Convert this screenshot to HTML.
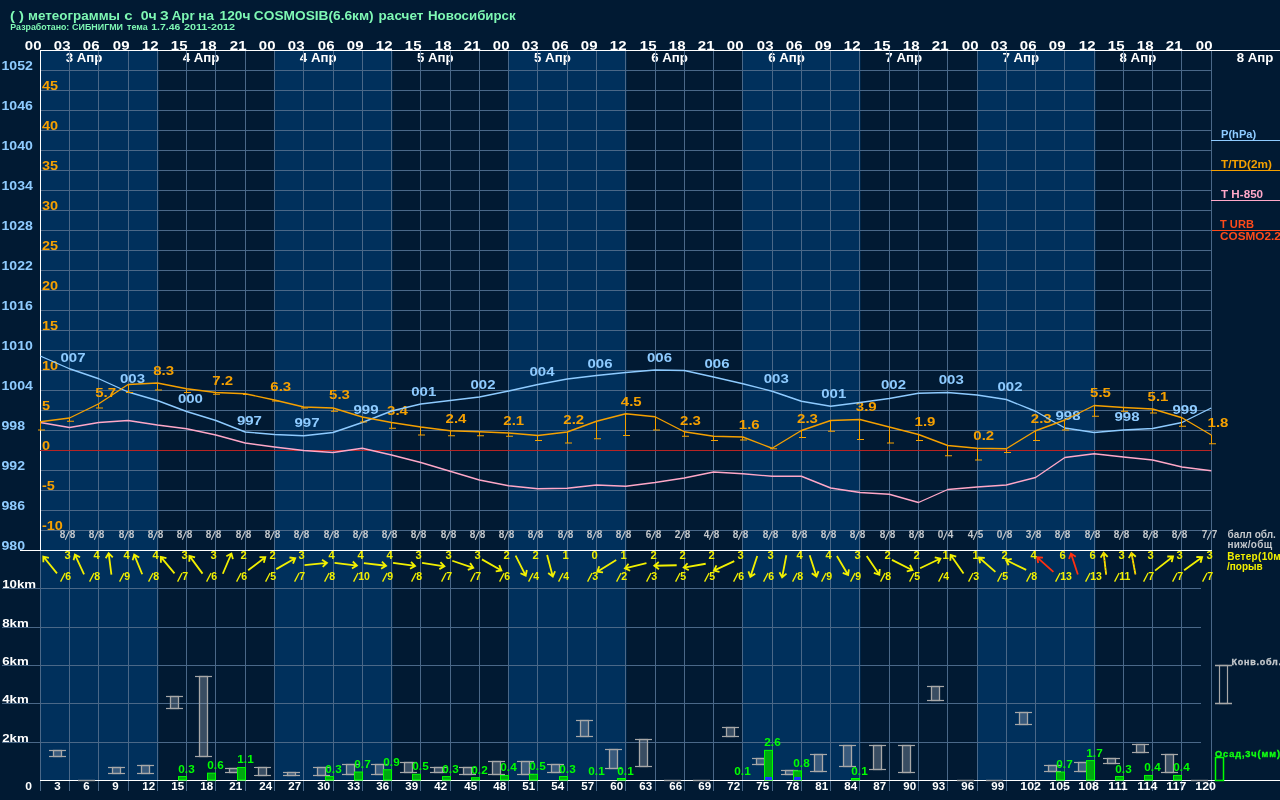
<!DOCTYPE html>
<html><head><meta charset="utf-8"><style>
html,body{margin:0;padding:0;background:#011a33;width:1280px;height:800px;overflow:hidden}
svg{display:block;will-change:transform;font-family:"Liberation Sans",sans-serif}
</style></head><body>
<svg width="1280" height="800" viewBox="0 0 1280 800">
<rect x="0" y="0" width="1280" height="800" fill="#011a33"/>
<rect x="40" y="50" width="118.5" height="730" fill="#00305c"/>
<rect x="274" y="50" width="118.5" height="730" fill="#00305c"/>
<rect x="508" y="50" width="118.5" height="730" fill="#00305c"/>
<rect x="742" y="50" width="118.5" height="730" fill="#00305c"/>
<rect x="977" y="50" width="118.5" height="730" fill="#00305c"/>
<text transform="translate(84.00,62.00) scale(1.06,1)" font-size="12.5" fill="#ffffff" text-anchor="middle" font-weight="bold">3 Апр</text>
<text transform="translate(201.10,62.00) scale(1.06,1)" font-size="12.5" fill="#ffffff" text-anchor="middle" font-weight="bold">4 Апр</text>
<text transform="translate(318.20,62.00) scale(1.06,1)" font-size="12.5" fill="#ffffff" text-anchor="middle" font-weight="bold">4 Апр</text>
<text transform="translate(435.30,62.00) scale(1.06,1)" font-size="12.5" fill="#ffffff" text-anchor="middle" font-weight="bold">5 Апр</text>
<text transform="translate(552.40,62.00) scale(1.06,1)" font-size="12.5" fill="#ffffff" text-anchor="middle" font-weight="bold">5 Апр</text>
<text transform="translate(669.50,62.00) scale(1.06,1)" font-size="12.5" fill="#ffffff" text-anchor="middle" font-weight="bold">6 Апр</text>
<text transform="translate(786.60,62.00) scale(1.06,1)" font-size="12.5" fill="#ffffff" text-anchor="middle" font-weight="bold">6 Апр</text>
<text transform="translate(903.70,62.00) scale(1.06,1)" font-size="12.5" fill="#ffffff" text-anchor="middle" font-weight="bold">7 Апр</text>
<text transform="translate(1020.80,62.00) scale(1.06,1)" font-size="12.5" fill="#ffffff" text-anchor="middle" font-weight="bold">7 Апр</text>
<text transform="translate(1137.90,62.00) scale(1.06,1)" font-size="12.5" fill="#ffffff" text-anchor="middle" font-weight="bold">8 Апр</text>
<text transform="translate(1255.00,62.00) scale(1.06,1)" font-size="12.5" fill="#ffffff" text-anchor="middle" font-weight="bold">8 Апр</text>
<line x1="40" y1="70.5" x2="1211.5" y2="70.5" stroke="#4a6888" stroke-width="1"/>
<line x1="40" y1="90.5" x2="1211.5" y2="90.5" stroke="#4a6888" stroke-width="1"/>
<line x1="40" y1="110.5" x2="1211.5" y2="110.5" stroke="#4a6888" stroke-width="1"/>
<line x1="40" y1="130.5" x2="1211.5" y2="130.5" stroke="#4a6888" stroke-width="1"/>
<line x1="40" y1="150.5" x2="1211.5" y2="150.5" stroke="#4a6888" stroke-width="1"/>
<line x1="40" y1="170.5" x2="1211.5" y2="170.5" stroke="#4a6888" stroke-width="1"/>
<line x1="40" y1="190.5" x2="1211.5" y2="190.5" stroke="#4a6888" stroke-width="1"/>
<line x1="40" y1="210.5" x2="1211.5" y2="210.5" stroke="#4a6888" stroke-width="1"/>
<line x1="40" y1="230.5" x2="1211.5" y2="230.5" stroke="#4a6888" stroke-width="1"/>
<line x1="40" y1="250.5" x2="1211.5" y2="250.5" stroke="#4a6888" stroke-width="1"/>
<line x1="40" y1="270.5" x2="1211.5" y2="270.5" stroke="#4a6888" stroke-width="1"/>
<line x1="40" y1="290.5" x2="1211.5" y2="290.5" stroke="#4a6888" stroke-width="1"/>
<line x1="40" y1="310.5" x2="1211.5" y2="310.5" stroke="#4a6888" stroke-width="1"/>
<line x1="40" y1="330.5" x2="1211.5" y2="330.5" stroke="#4a6888" stroke-width="1"/>
<line x1="40" y1="350.5" x2="1211.5" y2="350.5" stroke="#4a6888" stroke-width="1"/>
<line x1="40" y1="370.5" x2="1211.5" y2="370.5" stroke="#4a6888" stroke-width="1"/>
<line x1="40" y1="390.5" x2="1211.5" y2="390.5" stroke="#4a6888" stroke-width="1"/>
<line x1="40" y1="410.5" x2="1211.5" y2="410.5" stroke="#4a6888" stroke-width="1"/>
<line x1="40" y1="430.5" x2="1211.5" y2="430.5" stroke="#4a6888" stroke-width="1"/>
<line x1="40" y1="450.5" x2="1211.5" y2="450.5" stroke="#4a6888" stroke-width="1"/>
<line x1="40" y1="470.5" x2="1211.5" y2="470.5" stroke="#4a6888" stroke-width="1"/>
<line x1="40" y1="490.5" x2="1211.5" y2="490.5" stroke="#4a6888" stroke-width="1"/>
<line x1="40" y1="510.5" x2="1211.5" y2="510.5" stroke="#4a6888" stroke-width="1"/>
<line x1="40" y1="530.5" x2="1211.5" y2="530.5" stroke="#4a6888" stroke-width="1"/>
<line x1="2" y1="588.5" x2="1201" y2="588.5" stroke="#4a6888" stroke-width="1"/>
<line x1="2" y1="627.5" x2="1201" y2="627.5" stroke="#4a6888" stroke-width="1"/>
<line x1="2" y1="665.5" x2="1201" y2="665.5" stroke="#4a6888" stroke-width="1"/>
<line x1="2" y1="703.5" x2="1201" y2="703.5" stroke="#4a6888" stroke-width="1"/>
<line x1="2" y1="742.5" x2="1201" y2="742.5" stroke="#4a6888" stroke-width="1"/>
<line x1="69.5" y1="50" x2="69.5" y2="791" stroke="#4a6888" stroke-width="1"/>
<line x1="98.5" y1="50" x2="98.5" y2="791" stroke="#4a6888" stroke-width="1"/>
<line x1="128.5" y1="50" x2="128.5" y2="791" stroke="#4a6888" stroke-width="1"/>
<line x1="157.5" y1="50" x2="157.5" y2="791" stroke="#4a6888" stroke-width="1"/>
<line x1="186.5" y1="50" x2="186.5" y2="791" stroke="#4a6888" stroke-width="1"/>
<line x1="215.5" y1="50" x2="215.5" y2="791" stroke="#4a6888" stroke-width="1"/>
<line x1="245.5" y1="50" x2="245.5" y2="791" stroke="#4a6888" stroke-width="1"/>
<line x1="274.5" y1="50" x2="274.5" y2="791" stroke="#4a6888" stroke-width="1"/>
<line x1="303.5" y1="50" x2="303.5" y2="791" stroke="#4a6888" stroke-width="1"/>
<line x1="333.5" y1="50" x2="333.5" y2="791" stroke="#4a6888" stroke-width="1"/>
<line x1="362.5" y1="50" x2="362.5" y2="791" stroke="#4a6888" stroke-width="1"/>
<line x1="391.5" y1="50" x2="391.5" y2="791" stroke="#4a6888" stroke-width="1"/>
<line x1="420.5" y1="50" x2="420.5" y2="791" stroke="#4a6888" stroke-width="1"/>
<line x1="450.5" y1="50" x2="450.5" y2="791" stroke="#4a6888" stroke-width="1"/>
<line x1="479.5" y1="50" x2="479.5" y2="791" stroke="#4a6888" stroke-width="1"/>
<line x1="508.5" y1="50" x2="508.5" y2="791" stroke="#4a6888" stroke-width="1"/>
<line x1="537.5" y1="50" x2="537.5" y2="791" stroke="#4a6888" stroke-width="1"/>
<line x1="567.5" y1="50" x2="567.5" y2="791" stroke="#4a6888" stroke-width="1"/>
<line x1="596.5" y1="50" x2="596.5" y2="791" stroke="#4a6888" stroke-width="1"/>
<line x1="625.5" y1="50" x2="625.5" y2="791" stroke="#4a6888" stroke-width="1"/>
<line x1="655.5" y1="50" x2="655.5" y2="791" stroke="#4a6888" stroke-width="1"/>
<line x1="684.5" y1="50" x2="684.5" y2="791" stroke="#4a6888" stroke-width="1"/>
<line x1="713.5" y1="50" x2="713.5" y2="791" stroke="#4a6888" stroke-width="1"/>
<line x1="742.5" y1="50" x2="742.5" y2="791" stroke="#4a6888" stroke-width="1"/>
<line x1="772.5" y1="50" x2="772.5" y2="791" stroke="#4a6888" stroke-width="1"/>
<line x1="801.5" y1="50" x2="801.5" y2="791" stroke="#4a6888" stroke-width="1"/>
<line x1="830.5" y1="50" x2="830.5" y2="791" stroke="#4a6888" stroke-width="1"/>
<line x1="859.5" y1="50" x2="859.5" y2="791" stroke="#4a6888" stroke-width="1"/>
<line x1="889.5" y1="50" x2="889.5" y2="791" stroke="#4a6888" stroke-width="1"/>
<line x1="918.5" y1="50" x2="918.5" y2="791" stroke="#4a6888" stroke-width="1"/>
<line x1="947.5" y1="50" x2="947.5" y2="791" stroke="#4a6888" stroke-width="1"/>
<line x1="977.5" y1="50" x2="977.5" y2="791" stroke="#4a6888" stroke-width="1"/>
<line x1="1006.5" y1="50" x2="1006.5" y2="791" stroke="#4a6888" stroke-width="1"/>
<line x1="1035.5" y1="50" x2="1035.5" y2="791" stroke="#4a6888" stroke-width="1"/>
<line x1="1064.5" y1="50" x2="1064.5" y2="791" stroke="#4a6888" stroke-width="1"/>
<line x1="1094.5" y1="50" x2="1094.5" y2="791" stroke="#4a6888" stroke-width="1"/>
<line x1="1123.5" y1="50" x2="1123.5" y2="791" stroke="#4a6888" stroke-width="1"/>
<line x1="1152.5" y1="50" x2="1152.5" y2="791" stroke="#4a6888" stroke-width="1"/>
<line x1="1181.5" y1="50" x2="1181.5" y2="791" stroke="#4a6888" stroke-width="1"/>
<line x1="1211.5" y1="50" x2="1211.5" y2="791" stroke="#4a6888" stroke-width="1"/>
<line x1="40.5" y1="550" x2="40.5" y2="791" stroke="#4a6888" stroke-width="1"/>
<line x1="40" y1="50.5" x2="1280" y2="50.5" stroke="#ffffff" stroke-width="1"/>
<line x1="40.5" y1="50" x2="40.5" y2="551" stroke="#ffffff" stroke-width="1"/>
<line x1="20" y1="550.5" x2="1212" y2="550.5" stroke="#ffffff" stroke-width="1"/>
<line x1="40" y1="780.5" x2="1280" y2="780.5" stroke="#ffffff" stroke-width="1"/>
<line x1="40" y1="450.5" x2="1211.5" y2="450.5" stroke="#b82424" stroke-width="1"/>
<text transform="translate(10.01,20.00) scale(1.1814,1)" font-size="12.5" fill="#7ef8b4" text-anchor="start" font-weight="bold" xml:space="preserve">( )</text>
<text transform="translate(28.10,20.00) scale(1.073,1)" font-size="12.5" fill="#7ef8b4" text-anchor="start" font-weight="bold" xml:space="preserve">метеограммы</text>
<text transform="translate(124.20,20.00) scale(1.2,1)" font-size="12.5" fill="#7ef8b4" text-anchor="start" font-weight="bold" xml:space="preserve">с</text>
<text transform="translate(140.63,20.00) scale(1.1308,1)" font-size="12.5" fill="#7ef8b4" text-anchor="start" font-weight="bold" xml:space="preserve">0ч</text>
<text transform="translate(159.99,20.00) scale(1.248,1)" font-size="12.5" fill="#7ef8b4" text-anchor="start" font-weight="bold" xml:space="preserve">3</text>
<text transform="translate(171.84,20.00) scale(1.0541,1)" font-size="12.5" fill="#7ef8b4" text-anchor="start" font-weight="bold" xml:space="preserve">Apr</text>
<text transform="translate(198.29,20.00) scale(1.0857,1)" font-size="12.5" fill="#7ef8b4" text-anchor="start" font-weight="bold" xml:space="preserve">на</text>
<text transform="translate(219.58,20.00) scale(1.0991,1)" font-size="12.5" fill="#7ef8b4" text-anchor="start" font-weight="bold" xml:space="preserve">120ч</text>
<text transform="translate(253.85,20.00) scale(1.0984,1)" font-size="12.5" fill="#7ef8b4" text-anchor="start" font-weight="bold" xml:space="preserve">COSMOSIB(6.6км)</text>
<text transform="translate(378.59,20.00) scale(1.084,1)" font-size="12.5" fill="#7ef8b4" text-anchor="start" font-weight="bold" xml:space="preserve">расчет</text>
<text transform="translate(427.95,20.00) scale(1.0636,1)" font-size="12.5" fill="#7ef8b4" text-anchor="start" font-weight="bold" xml:space="preserve">Новосибирск</text>
<text transform="translate(10.35,30.00) scale(0.9806,1)" font-size="9" fill="#7ef8b4" text-anchor="start" font-weight="bold" xml:space="preserve">Разработано:</text>
<text transform="translate(72.05,30.00) scale(0.9911,1)" font-size="9" fill="#7ef8b4" text-anchor="start" font-weight="bold" xml:space="preserve">СИБНИГМИ</text>
<text transform="translate(127.05,30.00) scale(0.9928,1)" font-size="9" fill="#7ef8b4" text-anchor="start" font-weight="bold" xml:space="preserve">тема</text>
<text transform="translate(151.32,30.00) scale(1.1588,1)" font-size="9" fill="#7ef8b4" text-anchor="start" font-weight="bold" xml:space="preserve">1.7.46</text>
<text transform="translate(183.90,30.00) scale(1.2047,1)" font-size="9" fill="#7ef8b4" text-anchor="start" font-weight="bold" xml:space="preserve">2011-2012</text>
<text transform="translate(41.50,50.00) scale(1.2,1)" font-size="12.5" fill="#ffffff" text-anchor="end" font-weight="bold">00</text>
<text transform="translate(70.50,50.00) scale(1.2,1)" font-size="12.5" fill="#ffffff" text-anchor="end" font-weight="bold">03</text>
<text transform="translate(99.50,50.00) scale(1.2,1)" font-size="12.5" fill="#ffffff" text-anchor="end" font-weight="bold">06</text>
<text transform="translate(129.50,50.00) scale(1.2,1)" font-size="12.5" fill="#ffffff" text-anchor="end" font-weight="bold">09</text>
<text transform="translate(158.50,50.00) scale(1.2,1)" font-size="12.5" fill="#ffffff" text-anchor="end" font-weight="bold">12</text>
<text transform="translate(187.50,50.00) scale(1.2,1)" font-size="12.5" fill="#ffffff" text-anchor="end" font-weight="bold">15</text>
<text transform="translate(216.50,50.00) scale(1.2,1)" font-size="12.5" fill="#ffffff" text-anchor="end" font-weight="bold">18</text>
<text transform="translate(246.50,50.00) scale(1.2,1)" font-size="12.5" fill="#ffffff" text-anchor="end" font-weight="bold">21</text>
<text transform="translate(275.50,50.00) scale(1.2,1)" font-size="12.5" fill="#ffffff" text-anchor="end" font-weight="bold">00</text>
<text transform="translate(304.50,50.00) scale(1.2,1)" font-size="12.5" fill="#ffffff" text-anchor="end" font-weight="bold">03</text>
<text transform="translate(334.50,50.00) scale(1.2,1)" font-size="12.5" fill="#ffffff" text-anchor="end" font-weight="bold">06</text>
<text transform="translate(363.50,50.00) scale(1.2,1)" font-size="12.5" fill="#ffffff" text-anchor="end" font-weight="bold">09</text>
<text transform="translate(392.50,50.00) scale(1.2,1)" font-size="12.5" fill="#ffffff" text-anchor="end" font-weight="bold">12</text>
<text transform="translate(421.50,50.00) scale(1.2,1)" font-size="12.5" fill="#ffffff" text-anchor="end" font-weight="bold">15</text>
<text transform="translate(451.50,50.00) scale(1.2,1)" font-size="12.5" fill="#ffffff" text-anchor="end" font-weight="bold">18</text>
<text transform="translate(480.50,50.00) scale(1.2,1)" font-size="12.5" fill="#ffffff" text-anchor="end" font-weight="bold">21</text>
<text transform="translate(509.50,50.00) scale(1.2,1)" font-size="12.5" fill="#ffffff" text-anchor="end" font-weight="bold">00</text>
<text transform="translate(538.50,50.00) scale(1.2,1)" font-size="12.5" fill="#ffffff" text-anchor="end" font-weight="bold">03</text>
<text transform="translate(568.50,50.00) scale(1.2,1)" font-size="12.5" fill="#ffffff" text-anchor="end" font-weight="bold">06</text>
<text transform="translate(597.50,50.00) scale(1.2,1)" font-size="12.5" fill="#ffffff" text-anchor="end" font-weight="bold">09</text>
<text transform="translate(626.50,50.00) scale(1.2,1)" font-size="12.5" fill="#ffffff" text-anchor="end" font-weight="bold">12</text>
<text transform="translate(656.50,50.00) scale(1.2,1)" font-size="12.5" fill="#ffffff" text-anchor="end" font-weight="bold">15</text>
<text transform="translate(685.50,50.00) scale(1.2,1)" font-size="12.5" fill="#ffffff" text-anchor="end" font-weight="bold">18</text>
<text transform="translate(714.50,50.00) scale(1.2,1)" font-size="12.5" fill="#ffffff" text-anchor="end" font-weight="bold">21</text>
<text transform="translate(743.50,50.00) scale(1.2,1)" font-size="12.5" fill="#ffffff" text-anchor="end" font-weight="bold">00</text>
<text transform="translate(773.50,50.00) scale(1.2,1)" font-size="12.5" fill="#ffffff" text-anchor="end" font-weight="bold">03</text>
<text transform="translate(802.50,50.00) scale(1.2,1)" font-size="12.5" fill="#ffffff" text-anchor="end" font-weight="bold">06</text>
<text transform="translate(831.50,50.00) scale(1.2,1)" font-size="12.5" fill="#ffffff" text-anchor="end" font-weight="bold">09</text>
<text transform="translate(860.50,50.00) scale(1.2,1)" font-size="12.5" fill="#ffffff" text-anchor="end" font-weight="bold">12</text>
<text transform="translate(890.50,50.00) scale(1.2,1)" font-size="12.5" fill="#ffffff" text-anchor="end" font-weight="bold">15</text>
<text transform="translate(919.50,50.00) scale(1.2,1)" font-size="12.5" fill="#ffffff" text-anchor="end" font-weight="bold">18</text>
<text transform="translate(948.50,50.00) scale(1.2,1)" font-size="12.5" fill="#ffffff" text-anchor="end" font-weight="bold">21</text>
<text transform="translate(978.50,50.00) scale(1.2,1)" font-size="12.5" fill="#ffffff" text-anchor="end" font-weight="bold">00</text>
<text transform="translate(1007.50,50.00) scale(1.2,1)" font-size="12.5" fill="#ffffff" text-anchor="end" font-weight="bold">03</text>
<text transform="translate(1036.50,50.00) scale(1.2,1)" font-size="12.5" fill="#ffffff" text-anchor="end" font-weight="bold">06</text>
<text transform="translate(1065.50,50.00) scale(1.2,1)" font-size="12.5" fill="#ffffff" text-anchor="end" font-weight="bold">09</text>
<text transform="translate(1095.50,50.00) scale(1.2,1)" font-size="12.5" fill="#ffffff" text-anchor="end" font-weight="bold">12</text>
<text transform="translate(1124.50,50.00) scale(1.2,1)" font-size="12.5" fill="#ffffff" text-anchor="end" font-weight="bold">15</text>
<text transform="translate(1153.50,50.00) scale(1.2,1)" font-size="12.5" fill="#ffffff" text-anchor="end" font-weight="bold">18</text>
<text transform="translate(1182.50,50.00) scale(1.2,1)" font-size="12.5" fill="#ffffff" text-anchor="end" font-weight="bold">21</text>
<text transform="translate(1212.50,50.00) scale(1.2,1)" font-size="12.5" fill="#ffffff" text-anchor="end" font-weight="bold">00</text>
<text transform="translate(1.50,70.00) scale(1.13,1)" font-size="12.5" fill="#8ecbff" text-anchor="start" font-weight="bold">1052</text>
<text transform="translate(1.50,110.00) scale(1.13,1)" font-size="12.5" fill="#8ecbff" text-anchor="start" font-weight="bold">1046</text>
<text transform="translate(1.50,150.00) scale(1.13,1)" font-size="12.5" fill="#8ecbff" text-anchor="start" font-weight="bold">1040</text>
<text transform="translate(1.50,190.00) scale(1.13,1)" font-size="12.5" fill="#8ecbff" text-anchor="start" font-weight="bold">1034</text>
<text transform="translate(1.50,230.00) scale(1.13,1)" font-size="12.5" fill="#8ecbff" text-anchor="start" font-weight="bold">1028</text>
<text transform="translate(1.50,270.00) scale(1.13,1)" font-size="12.5" fill="#8ecbff" text-anchor="start" font-weight="bold">1022</text>
<text transform="translate(1.50,310.00) scale(1.13,1)" font-size="12.5" fill="#8ecbff" text-anchor="start" font-weight="bold">1016</text>
<text transform="translate(1.50,350.00) scale(1.13,1)" font-size="12.5" fill="#8ecbff" text-anchor="start" font-weight="bold">1010</text>
<text transform="translate(1.50,390.00) scale(1.13,1)" font-size="12.5" fill="#8ecbff" text-anchor="start" font-weight="bold">1004</text>
<text transform="translate(1.50,430.00) scale(1.13,1)" font-size="12.5" fill="#8ecbff" text-anchor="start" font-weight="bold">998</text>
<text transform="translate(1.50,470.00) scale(1.13,1)" font-size="12.5" fill="#8ecbff" text-anchor="start" font-weight="bold">992</text>
<text transform="translate(1.50,510.00) scale(1.13,1)" font-size="12.5" fill="#8ecbff" text-anchor="start" font-weight="bold">986</text>
<text transform="translate(1.50,550.00) scale(1.13,1)" font-size="12.5" fill="#8ecbff" text-anchor="start" font-weight="bold">980</text>
<text transform="translate(42.00,90.00) scale(1.16,1)" font-size="12.5" fill="#f5a000" text-anchor="start" font-weight="bold">45</text>
<text transform="translate(42.00,130.00) scale(1.16,1)" font-size="12.5" fill="#f5a000" text-anchor="start" font-weight="bold">40</text>
<text transform="translate(42.00,170.00) scale(1.16,1)" font-size="12.5" fill="#f5a000" text-anchor="start" font-weight="bold">35</text>
<text transform="translate(42.00,210.00) scale(1.16,1)" font-size="12.5" fill="#f5a000" text-anchor="start" font-weight="bold">30</text>
<text transform="translate(42.00,250.00) scale(1.16,1)" font-size="12.5" fill="#f5a000" text-anchor="start" font-weight="bold">25</text>
<text transform="translate(42.00,290.00) scale(1.16,1)" font-size="12.5" fill="#f5a000" text-anchor="start" font-weight="bold">20</text>
<text transform="translate(42.00,330.00) scale(1.16,1)" font-size="12.5" fill="#f5a000" text-anchor="start" font-weight="bold">15</text>
<text transform="translate(42.00,370.00) scale(1.16,1)" font-size="12.5" fill="#f5a000" text-anchor="start" font-weight="bold">10</text>
<text transform="translate(42.00,410.00) scale(1.16,1)" font-size="12.5" fill="#f5a000" text-anchor="start" font-weight="bold">5</text>
<text transform="translate(42.00,450.00) scale(1.16,1)" font-size="12.5" fill="#f5a000" text-anchor="start" font-weight="bold">0</text>
<text transform="translate(42.00,490.00) scale(1.16,1)" font-size="12.5" fill="#f5a000" text-anchor="start" font-weight="bold">-5</text>
<text transform="translate(42.00,530.00) scale(1.16,1)" font-size="12.5" fill="#f5a000" text-anchor="start" font-weight="bold">-10</text>
<text transform="translate(73.00,361.50) scale(1.2,1)" font-size="12.5" fill="#8ecbff" text-anchor="middle" font-weight="bold">007</text>
<text transform="translate(132.50,383.25) scale(1.2,1)" font-size="12.5" fill="#8ecbff" text-anchor="middle" font-weight="bold">003</text>
<text transform="translate(190.40,403.25) scale(1.2,1)" font-size="12.5" fill="#8ecbff" text-anchor="middle" font-weight="bold">000</text>
<text transform="translate(249.40,424.50) scale(1.2,1)" font-size="12.5" fill="#8ecbff" text-anchor="middle" font-weight="bold">997</text>
<text transform="translate(307.00,427.00) scale(1.2,1)" font-size="12.5" fill="#8ecbff" text-anchor="middle" font-weight="bold">997</text>
<text transform="translate(366.00,414.00) scale(1.2,1)" font-size="12.5" fill="#8ecbff" text-anchor="middle" font-weight="bold">999</text>
<text transform="translate(423.75,396.25) scale(1.2,1)" font-size="12.5" fill="#8ecbff" text-anchor="middle" font-weight="bold">001</text>
<text transform="translate(483.00,389.00) scale(1.2,1)" font-size="12.5" fill="#8ecbff" text-anchor="middle" font-weight="bold">002</text>
<text transform="translate(542.00,376.25) scale(1.2,1)" font-size="12.5" fill="#8ecbff" text-anchor="middle" font-weight="bold">004</text>
<text transform="translate(600.00,368.25) scale(1.2,1)" font-size="12.5" fill="#8ecbff" text-anchor="middle" font-weight="bold">006</text>
<text transform="translate(659.50,362.00) scale(1.2,1)" font-size="12.5" fill="#8ecbff" text-anchor="middle" font-weight="bold">006</text>
<text transform="translate(717.00,368.25) scale(1.2,1)" font-size="12.5" fill="#8ecbff" text-anchor="middle" font-weight="bold">006</text>
<text transform="translate(776.25,383.25) scale(1.2,1)" font-size="12.5" fill="#8ecbff" text-anchor="middle" font-weight="bold">003</text>
<text transform="translate(833.75,398.25) scale(1.2,1)" font-size="12.5" fill="#8ecbff" text-anchor="middle" font-weight="bold">001</text>
<text transform="translate(893.50,389.00) scale(1.2,1)" font-size="12.5" fill="#8ecbff" text-anchor="middle" font-weight="bold">002</text>
<text transform="translate(951.25,384.00) scale(1.2,1)" font-size="12.5" fill="#8ecbff" text-anchor="middle" font-weight="bold">003</text>
<text transform="translate(1010.00,390.75) scale(1.2,1)" font-size="12.5" fill="#8ecbff" text-anchor="middle" font-weight="bold">002</text>
<text transform="translate(1068.00,420.00) scale(1.2,1)" font-size="12.5" fill="#8ecbff" text-anchor="middle" font-weight="bold">998</text>
<text transform="translate(1127.00,420.75) scale(1.2,1)" font-size="12.5" fill="#8ecbff" text-anchor="middle" font-weight="bold">998</text>
<text transform="translate(1185.00,414.00) scale(1.2,1)" font-size="12.5" fill="#8ecbff" text-anchor="middle" font-weight="bold">999</text>
<text transform="translate(105.60,396.50) scale(1.2,1)" font-size="12.5" fill="#f5a000" text-anchor="middle" font-weight="bold">5.7</text>
<text transform="translate(163.60,375.25) scale(1.2,1)" font-size="12.5" fill="#f5a000" text-anchor="middle" font-weight="bold">8.3</text>
<text transform="translate(222.75,384.50) scale(1.2,1)" font-size="12.5" fill="#f5a000" text-anchor="middle" font-weight="bold">7.2</text>
<text transform="translate(280.75,391.25) scale(1.2,1)" font-size="12.5" fill="#f5a000" text-anchor="middle" font-weight="bold">6.3</text>
<text transform="translate(339.50,398.50) scale(1.2,1)" font-size="12.5" fill="#f5a000" text-anchor="middle" font-weight="bold">5.3</text>
<text transform="translate(397.50,415.25) scale(1.2,1)" font-size="12.5" fill="#f5a000" text-anchor="middle" font-weight="bold">3.4</text>
<text transform="translate(456.00,423.25) scale(1.2,1)" font-size="12.5" fill="#f5a000" text-anchor="middle" font-weight="bold">2.4</text>
<text transform="translate(513.75,425.00) scale(1.2,1)" font-size="12.5" fill="#f5a000" text-anchor="middle" font-weight="bold">2.1</text>
<text transform="translate(573.75,424.00) scale(1.2,1)" font-size="12.5" fill="#f5a000" text-anchor="middle" font-weight="bold">2.2</text>
<text transform="translate(631.25,405.75) scale(1.2,1)" font-size="12.5" fill="#f5a000" text-anchor="middle" font-weight="bold">4.5</text>
<text transform="translate(690.50,424.50) scale(1.2,1)" font-size="12.5" fill="#f5a000" text-anchor="middle" font-weight="bold">2.3</text>
<text transform="translate(749.25,429.00) scale(1.2,1)" font-size="12.5" fill="#f5a000" text-anchor="middle" font-weight="bold">1.6</text>
<text transform="translate(807.50,423.25) scale(1.2,1)" font-size="12.5" fill="#f5a000" text-anchor="middle" font-weight="bold">2.3</text>
<text transform="translate(866.25,411.25) scale(1.2,1)" font-size="12.5" fill="#f5a000" text-anchor="middle" font-weight="bold">3.9</text>
<text transform="translate(925.00,425.75) scale(1.2,1)" font-size="12.5" fill="#f5a000" text-anchor="middle" font-weight="bold">1.9</text>
<text transform="translate(983.75,440.00) scale(1.2,1)" font-size="12.5" fill="#f5a000" text-anchor="middle" font-weight="bold">0.2</text>
<text transform="translate(1041.25,423.25) scale(1.2,1)" font-size="12.5" fill="#f5a000" text-anchor="middle" font-weight="bold">2.3</text>
<text transform="translate(1100.50,397.00) scale(1.2,1)" font-size="12.5" fill="#f5a000" text-anchor="middle" font-weight="bold">5.5</text>
<text transform="translate(1158.00,401.25) scale(1.2,1)" font-size="12.5" fill="#f5a000" text-anchor="middle" font-weight="bold">5.1</text>
<text transform="translate(1218.00,427.00) scale(1.2,1)" font-size="12.5" fill="#f5a000" text-anchor="middle" font-weight="bold">1.8</text>
<polyline points="40.25,422.50 69.53,427.50 98.80,422.50 128.07,420.50 157.35,425.00 186.62,428.75 215.90,435.00 245.17,443.00 274.45,447.00 303.72,450.50 333.00,452.50 362.27,448.25 391.55,455.00 420.82,462.50 450.10,471.25 479.38,480.00 508.65,485.75 537.92,488.75 567.20,488.25 596.48,485.00 625.75,486.25 655.02,482.50 684.30,478.00 713.57,472.00 742.85,473.75 772.12,476.25 801.40,476.25 830.67,488.00 859.95,492.50 889.22,494.25 918.50,502.50 947.77,489.50 977.05,487.00 1006.32,485.00 1035.60,477.50 1064.88,457.50 1094.15,453.75 1123.42,457.00 1152.70,460.00 1181.97,467.00 1211.25,470.75" fill="none" stroke="#ffa8c8" stroke-width="1.35" stroke-linejoin="round"/>
<polyline points="40.25,356.00 69.53,368.75 98.80,378.75 128.07,392.00 157.35,400.50 186.62,411.50 215.90,420.50 245.17,432.00 274.45,434.50 303.72,435.75 333.00,432.50 362.27,422.50 391.55,411.00 420.82,404.00 450.10,400.50 479.38,397.00 508.65,391.00 537.92,384.50 567.20,379.00 596.48,375.50 625.75,372.50 655.02,370.00 684.30,370.50 713.57,377.00 742.85,383.75 772.12,391.25 801.40,401.25 830.67,406.25 859.95,402.50 889.22,398.50 918.50,393.25 947.77,392.50 977.05,395.00 1006.32,399.50 1035.60,411.25 1064.88,428.00 1094.15,432.50 1123.42,430.00 1152.70,428.50 1181.97,422.50 1211.25,408.00" fill="none" stroke="#8ecbff" stroke-width="1.35" stroke-linejoin="round"/>
<polyline points="40.25,421.75 69.53,418.00 98.80,403.75 128.07,384.50 157.35,383.00 186.62,388.75 215.90,392.50 245.17,393.75 274.45,400.00 303.72,407.00 333.00,408.00 362.27,417.00 391.55,422.50 420.82,427.00 450.10,430.75 479.38,431.75 508.65,433.00 537.92,435.50 567.20,432.00 596.48,421.25 625.75,413.75 655.02,416.75 684.30,431.75 713.57,436.25 742.85,437.00 772.12,448.25 801.40,430.50 830.67,420.50 859.95,419.50 889.22,427.00 918.50,434.50 947.77,445.50 977.05,448.25 1006.32,448.75 1035.60,430.75 1064.88,420.00 1094.15,405.50 1123.42,407.50 1152.70,409.00 1181.97,417.75 1211.25,435.00" fill="none" stroke="#f5a000" stroke-width="1.35" stroke-linejoin="round"/>
<line x1="40.5" y1="421.75" x2="40.5" y2="430" stroke="#f5a000" stroke-width="1"/>
<line x1="38" y1="430" x2="45" y2="430" stroke="#f5a000" stroke-width="1"/>
<line x1="69.5" y1="418" x2="69.5" y2="421.25" stroke="#f5a000" stroke-width="1"/>
<line x1="67" y1="421.25" x2="74" y2="421.25" stroke="#f5a000" stroke-width="1"/>
<line x1="98.5" y1="403.75" x2="98.5" y2="408" stroke="#f5a000" stroke-width="1"/>
<line x1="96" y1="408" x2="103" y2="408" stroke="#f5a000" stroke-width="1"/>
<line x1="128.5" y1="384.5" x2="128.5" y2="392.5" stroke="#f5a000" stroke-width="1"/>
<line x1="126" y1="392.5" x2="133" y2="392.5" stroke="#f5a000" stroke-width="1"/>
<line x1="157.5" y1="383" x2="157.5" y2="390" stroke="#f5a000" stroke-width="1"/>
<line x1="155" y1="390" x2="162" y2="390" stroke="#f5a000" stroke-width="1"/>
<line x1="186.5" y1="388.75" x2="186.5" y2="392.5" stroke="#f5a000" stroke-width="1"/>
<line x1="184" y1="392.5" x2="191" y2="392.5" stroke="#f5a000" stroke-width="1"/>
<line x1="215.5" y1="392.5" x2="215.5" y2="394.25" stroke="#f5a000" stroke-width="1"/>
<line x1="213" y1="394.25" x2="220" y2="394.25" stroke="#f5a000" stroke-width="1"/>
<line x1="245.5" y1="393.75" x2="245.5" y2="394.5" stroke="#f5a000" stroke-width="1"/>
<line x1="243" y1="394.5" x2="250" y2="394.5" stroke="#f5a000" stroke-width="1"/>
<line x1="274.5" y1="400" x2="274.5" y2="401" stroke="#f5a000" stroke-width="1"/>
<line x1="272" y1="401" x2="279" y2="401" stroke="#f5a000" stroke-width="1"/>
<line x1="303.5" y1="407" x2="303.5" y2="408" stroke="#f5a000" stroke-width="1"/>
<line x1="301" y1="408" x2="308" y2="408" stroke="#f5a000" stroke-width="1"/>
<line x1="333.5" y1="408" x2="333.5" y2="411.25" stroke="#f5a000" stroke-width="1"/>
<line x1="331" y1="411.25" x2="338" y2="411.25" stroke="#f5a000" stroke-width="1"/>
<line x1="362.5" y1="417" x2="362.5" y2="422" stroke="#f5a000" stroke-width="1"/>
<line x1="360" y1="422" x2="367" y2="422" stroke="#f5a000" stroke-width="1"/>
<line x1="391.5" y1="422.5" x2="391.5" y2="428.25" stroke="#f5a000" stroke-width="1"/>
<line x1="389" y1="428.25" x2="396" y2="428.25" stroke="#f5a000" stroke-width="1"/>
<line x1="420.5" y1="427" x2="420.5" y2="435" stroke="#f5a000" stroke-width="1"/>
<line x1="418" y1="435" x2="425" y2="435" stroke="#f5a000" stroke-width="1"/>
<line x1="450.5" y1="430.75" x2="450.5" y2="435.75" stroke="#f5a000" stroke-width="1"/>
<line x1="448" y1="435.75" x2="455" y2="435.75" stroke="#f5a000" stroke-width="1"/>
<line x1="479.5" y1="431.75" x2="479.5" y2="435.75" stroke="#f5a000" stroke-width="1"/>
<line x1="477" y1="435.75" x2="484" y2="435.75" stroke="#f5a000" stroke-width="1"/>
<line x1="508.5" y1="433" x2="508.5" y2="436.25" stroke="#f5a000" stroke-width="1"/>
<line x1="506" y1="436.25" x2="513" y2="436.25" stroke="#f5a000" stroke-width="1"/>
<line x1="537.5" y1="435.5" x2="537.5" y2="440.5" stroke="#f5a000" stroke-width="1"/>
<line x1="535" y1="440.5" x2="542" y2="440.5" stroke="#f5a000" stroke-width="1"/>
<line x1="567.5" y1="432" x2="567.5" y2="443" stroke="#f5a000" stroke-width="1"/>
<line x1="565" y1="443" x2="572" y2="443" stroke="#f5a000" stroke-width="1"/>
<line x1="596.5" y1="421.25" x2="596.5" y2="438.75" stroke="#f5a000" stroke-width="1"/>
<line x1="594" y1="438.75" x2="601" y2="438.75" stroke="#f5a000" stroke-width="1"/>
<line x1="625.5" y1="413.75" x2="625.5" y2="435.5" stroke="#f5a000" stroke-width="1"/>
<line x1="623" y1="435.5" x2="630" y2="435.5" stroke="#f5a000" stroke-width="1"/>
<line x1="655.5" y1="416.75" x2="655.5" y2="430" stroke="#f5a000" stroke-width="1"/>
<line x1="653" y1="430" x2="660" y2="430" stroke="#f5a000" stroke-width="1"/>
<line x1="684.5" y1="431.75" x2="684.5" y2="436.25" stroke="#f5a000" stroke-width="1"/>
<line x1="682" y1="436.25" x2="689" y2="436.25" stroke="#f5a000" stroke-width="1"/>
<line x1="713.5" y1="436.25" x2="713.5" y2="440.5" stroke="#f5a000" stroke-width="1"/>
<line x1="711" y1="440.5" x2="718" y2="440.5" stroke="#f5a000" stroke-width="1"/>
<line x1="742.5" y1="437" x2="742.5" y2="440" stroke="#f5a000" stroke-width="1"/>
<line x1="740" y1="440" x2="747" y2="440" stroke="#f5a000" stroke-width="1"/>
<line x1="770" y1="448.75" x2="777" y2="448.75" stroke="#f5a000" stroke-width="1"/>
<line x1="801.5" y1="430.5" x2="801.5" y2="437.5" stroke="#f5a000" stroke-width="1"/>
<line x1="799" y1="437.5" x2="806" y2="437.5" stroke="#f5a000" stroke-width="1"/>
<line x1="830.5" y1="420.5" x2="830.5" y2="431.25" stroke="#f5a000" stroke-width="1"/>
<line x1="828" y1="431.25" x2="835" y2="431.25" stroke="#f5a000" stroke-width="1"/>
<line x1="859.5" y1="419.5" x2="859.5" y2="439.5" stroke="#f5a000" stroke-width="1"/>
<line x1="857" y1="439.5" x2="864" y2="439.5" stroke="#f5a000" stroke-width="1"/>
<line x1="889.5" y1="427" x2="889.5" y2="443" stroke="#f5a000" stroke-width="1"/>
<line x1="887" y1="443" x2="894" y2="443" stroke="#f5a000" stroke-width="1"/>
<line x1="918.5" y1="434.5" x2="918.5" y2="440.5" stroke="#f5a000" stroke-width="1"/>
<line x1="916" y1="440.5" x2="923" y2="440.5" stroke="#f5a000" stroke-width="1"/>
<line x1="947.5" y1="445.5" x2="947.5" y2="455.75" stroke="#f5a000" stroke-width="1"/>
<line x1="945" y1="455.75" x2="952" y2="455.75" stroke="#f5a000" stroke-width="1"/>
<line x1="977.5" y1="448.25" x2="977.5" y2="460" stroke="#f5a000" stroke-width="1"/>
<line x1="975" y1="460" x2="982" y2="460" stroke="#f5a000" stroke-width="1"/>
<line x1="1006.5" y1="448.75" x2="1006.5" y2="452.5" stroke="#f5a000" stroke-width="1"/>
<line x1="1004" y1="452.5" x2="1011" y2="452.5" stroke="#f5a000" stroke-width="1"/>
<line x1="1035.5" y1="430.75" x2="1035.5" y2="440.5" stroke="#f5a000" stroke-width="1"/>
<line x1="1033" y1="440.5" x2="1040" y2="440.5" stroke="#f5a000" stroke-width="1"/>
<line x1="1064.5" y1="420" x2="1064.5" y2="430" stroke="#f5a000" stroke-width="1"/>
<line x1="1062" y1="430" x2="1069" y2="430" stroke="#f5a000" stroke-width="1"/>
<line x1="1094.5" y1="405.5" x2="1094.5" y2="416.25" stroke="#f5a000" stroke-width="1"/>
<line x1="1092" y1="416.25" x2="1099" y2="416.25" stroke="#f5a000" stroke-width="1"/>
<line x1="1123.5" y1="407.5" x2="1123.5" y2="411.25" stroke="#f5a000" stroke-width="1"/>
<line x1="1121" y1="411.25" x2="1128" y2="411.25" stroke="#f5a000" stroke-width="1"/>
<line x1="1152.5" y1="409" x2="1152.5" y2="413" stroke="#f5a000" stroke-width="1"/>
<line x1="1150" y1="413" x2="1157" y2="413" stroke="#f5a000" stroke-width="1"/>
<line x1="1181.5" y1="417.75" x2="1181.5" y2="426.25" stroke="#f5a000" stroke-width="1"/>
<line x1="1179" y1="426.25" x2="1186" y2="426.25" stroke="#f5a000" stroke-width="1"/>
<line x1="1211.5" y1="435" x2="1211.5" y2="443.75" stroke="#f5a000" stroke-width="1"/>
<line x1="1209" y1="443.75" x2="1216" y2="443.75" stroke="#f5a000" stroke-width="1"/>
<text transform="translate(1221.00,138.00) scale(1.01,1)" font-size="11" fill="#8ecbff" text-anchor="start" font-weight="bold">P(hPa)</text>
<line x1="1211" y1="140.5" x2="1280" y2="140.5" stroke="#8ecbff" stroke-width="1"/>
<text transform="translate(1221.00,168.00) scale(1.07,1)" font-size="11" fill="#f5a000" text-anchor="start" font-weight="bold">T/TD(2m)</text>
<line x1="1211" y1="170.5" x2="1280" y2="170.5" stroke="#f5a000" stroke-width="1"/>
<text transform="translate(1221.00,198.00) scale(1.06,1)" font-size="11" fill="#ffa8c8" text-anchor="start" font-weight="bold">T H-850</text>
<line x1="1211" y1="200.5" x2="1280" y2="200.5" stroke="#ffa8c8" stroke-width="1"/>
<text transform="translate(1220.00,228.00) scale(1.01,1)" font-size="11" fill="#ff4a1a" text-anchor="start" font-weight="bold">T URB</text>
<line x1="1212" y1="230.5" x2="1280" y2="230.5" stroke="#ff4a1a" stroke-width="1"/>
<text transform="translate(1220.00,240.00) scale(1.07,1)" font-size="11" fill="#ff4a1a" text-anchor="start" font-weight="bold">COSMO2.2</text>
<text transform="translate(65.40,538.00) scale(1.0,1)" font-size="10" fill="#c4c8cc" text-anchor="end" font-weight="bold">8</text>
<line x1="65.3" y1="539.8" x2="69.3" y2="531" stroke="#c4c8cc" stroke-width="1.1"/>
<text transform="translate(69.70,538.00) scale(1.0,1)" font-size="10" fill="#c4c8cc" text-anchor="start" font-weight="bold">8</text>
<text transform="translate(94.40,538.00) scale(1.0,1)" font-size="10" fill="#c4c8cc" text-anchor="end" font-weight="bold">8</text>
<line x1="94.3" y1="539.8" x2="98.3" y2="531" stroke="#c4c8cc" stroke-width="1.1"/>
<text transform="translate(98.70,538.00) scale(1.0,1)" font-size="10" fill="#c4c8cc" text-anchor="start" font-weight="bold">8</text>
<text transform="translate(124.40,538.00) scale(1.0,1)" font-size="10" fill="#c4c8cc" text-anchor="end" font-weight="bold">8</text>
<line x1="124.3" y1="539.8" x2="128.3" y2="531" stroke="#c4c8cc" stroke-width="1.1"/>
<text transform="translate(128.70,538.00) scale(1.0,1)" font-size="10" fill="#c4c8cc" text-anchor="start" font-weight="bold">8</text>
<text transform="translate(153.40,538.00) scale(1.0,1)" font-size="10" fill="#c4c8cc" text-anchor="end" font-weight="bold">8</text>
<line x1="153.29999999999998" y1="539.8" x2="157.29999999999998" y2="531" stroke="#c4c8cc" stroke-width="1.1"/>
<text transform="translate(157.70,538.00) scale(1.0,1)" font-size="10" fill="#c4c8cc" text-anchor="start" font-weight="bold">8</text>
<text transform="translate(182.40,538.00) scale(1.0,1)" font-size="10" fill="#c4c8cc" text-anchor="end" font-weight="bold">8</text>
<line x1="182.29999999999998" y1="539.8" x2="186.29999999999998" y2="531" stroke="#c4c8cc" stroke-width="1.1"/>
<text transform="translate(186.70,538.00) scale(1.0,1)" font-size="10" fill="#c4c8cc" text-anchor="start" font-weight="bold">8</text>
<text transform="translate(211.40,538.00) scale(1.0,1)" font-size="10" fill="#c4c8cc" text-anchor="end" font-weight="bold">8</text>
<line x1="211.29999999999998" y1="539.8" x2="215.29999999999998" y2="531" stroke="#c4c8cc" stroke-width="1.1"/>
<text transform="translate(215.70,538.00) scale(1.0,1)" font-size="10" fill="#c4c8cc" text-anchor="start" font-weight="bold">8</text>
<text transform="translate(241.40,538.00) scale(1.0,1)" font-size="10" fill="#c4c8cc" text-anchor="end" font-weight="bold">8</text>
<line x1="241.29999999999998" y1="539.8" x2="245.29999999999998" y2="531" stroke="#c4c8cc" stroke-width="1.1"/>
<text transform="translate(245.70,538.00) scale(1.0,1)" font-size="10" fill="#c4c8cc" text-anchor="start" font-weight="bold">8</text>
<text transform="translate(270.40,538.00) scale(1.0,1)" font-size="10" fill="#c4c8cc" text-anchor="end" font-weight="bold">8</text>
<line x1="270.3" y1="539.8" x2="274.3" y2="531" stroke="#c4c8cc" stroke-width="1.1"/>
<text transform="translate(274.70,538.00) scale(1.0,1)" font-size="10" fill="#c4c8cc" text-anchor="start" font-weight="bold">8</text>
<text transform="translate(299.40,538.00) scale(1.0,1)" font-size="10" fill="#c4c8cc" text-anchor="end" font-weight="bold">8</text>
<line x1="299.3" y1="539.8" x2="303.3" y2="531" stroke="#c4c8cc" stroke-width="1.1"/>
<text transform="translate(303.70,538.00) scale(1.0,1)" font-size="10" fill="#c4c8cc" text-anchor="start" font-weight="bold">8</text>
<text transform="translate(329.40,538.00) scale(1.0,1)" font-size="10" fill="#c4c8cc" text-anchor="end" font-weight="bold">8</text>
<line x1="329.3" y1="539.8" x2="333.3" y2="531" stroke="#c4c8cc" stroke-width="1.1"/>
<text transform="translate(333.70,538.00) scale(1.0,1)" font-size="10" fill="#c4c8cc" text-anchor="start" font-weight="bold">8</text>
<text transform="translate(358.40,538.00) scale(1.0,1)" font-size="10" fill="#c4c8cc" text-anchor="end" font-weight="bold">8</text>
<line x1="358.3" y1="539.8" x2="362.3" y2="531" stroke="#c4c8cc" stroke-width="1.1"/>
<text transform="translate(362.70,538.00) scale(1.0,1)" font-size="10" fill="#c4c8cc" text-anchor="start" font-weight="bold">8</text>
<text transform="translate(387.40,538.00) scale(1.0,1)" font-size="10" fill="#c4c8cc" text-anchor="end" font-weight="bold">8</text>
<line x1="387.3" y1="539.8" x2="391.3" y2="531" stroke="#c4c8cc" stroke-width="1.1"/>
<text transform="translate(391.70,538.00) scale(1.0,1)" font-size="10" fill="#c4c8cc" text-anchor="start" font-weight="bold">8</text>
<text transform="translate(416.40,538.00) scale(1.0,1)" font-size="10" fill="#c4c8cc" text-anchor="end" font-weight="bold">8</text>
<line x1="416.3" y1="539.8" x2="420.3" y2="531" stroke="#c4c8cc" stroke-width="1.1"/>
<text transform="translate(420.70,538.00) scale(1.0,1)" font-size="10" fill="#c4c8cc" text-anchor="start" font-weight="bold">8</text>
<text transform="translate(446.40,538.00) scale(1.0,1)" font-size="10" fill="#c4c8cc" text-anchor="end" font-weight="bold">8</text>
<line x1="446.3" y1="539.8" x2="450.3" y2="531" stroke="#c4c8cc" stroke-width="1.1"/>
<text transform="translate(450.70,538.00) scale(1.0,1)" font-size="10" fill="#c4c8cc" text-anchor="start" font-weight="bold">8</text>
<text transform="translate(475.40,538.00) scale(1.0,1)" font-size="10" fill="#c4c8cc" text-anchor="end" font-weight="bold">8</text>
<line x1="475.3" y1="539.8" x2="479.3" y2="531" stroke="#c4c8cc" stroke-width="1.1"/>
<text transform="translate(479.70,538.00) scale(1.0,1)" font-size="10" fill="#c4c8cc" text-anchor="start" font-weight="bold">8</text>
<text transform="translate(504.40,538.00) scale(1.0,1)" font-size="10" fill="#c4c8cc" text-anchor="end" font-weight="bold">8</text>
<line x1="504.3" y1="539.8" x2="508.3" y2="531" stroke="#c4c8cc" stroke-width="1.1"/>
<text transform="translate(508.70,538.00) scale(1.0,1)" font-size="10" fill="#c4c8cc" text-anchor="start" font-weight="bold">8</text>
<text transform="translate(533.40,538.00) scale(1.0,1)" font-size="10" fill="#c4c8cc" text-anchor="end" font-weight="bold">8</text>
<line x1="533.3000000000001" y1="539.8" x2="537.3000000000001" y2="531" stroke="#c4c8cc" stroke-width="1.1"/>
<text transform="translate(537.70,538.00) scale(1.0,1)" font-size="10" fill="#c4c8cc" text-anchor="start" font-weight="bold">8</text>
<text transform="translate(563.40,538.00) scale(1.0,1)" font-size="10" fill="#c4c8cc" text-anchor="end" font-weight="bold">8</text>
<line x1="563.3000000000001" y1="539.8" x2="567.3000000000001" y2="531" stroke="#c4c8cc" stroke-width="1.1"/>
<text transform="translate(567.70,538.00) scale(1.0,1)" font-size="10" fill="#c4c8cc" text-anchor="start" font-weight="bold">8</text>
<text transform="translate(592.40,538.00) scale(1.0,1)" font-size="10" fill="#c4c8cc" text-anchor="end" font-weight="bold">8</text>
<line x1="592.3000000000001" y1="539.8" x2="596.3000000000001" y2="531" stroke="#c4c8cc" stroke-width="1.1"/>
<text transform="translate(596.70,538.00) scale(1.0,1)" font-size="10" fill="#c4c8cc" text-anchor="start" font-weight="bold">8</text>
<text transform="translate(621.40,538.00) scale(1.0,1)" font-size="10" fill="#c4c8cc" text-anchor="end" font-weight="bold">8</text>
<line x1="621.3000000000001" y1="539.8" x2="625.3000000000001" y2="531" stroke="#c4c8cc" stroke-width="1.1"/>
<text transform="translate(625.70,538.00) scale(1.0,1)" font-size="10" fill="#c4c8cc" text-anchor="start" font-weight="bold">8</text>
<text transform="translate(651.40,538.00) scale(1.0,1)" font-size="10" fill="#c4c8cc" text-anchor="end" font-weight="bold">6</text>
<line x1="651.3000000000001" y1="539.8" x2="655.3000000000001" y2="531" stroke="#c4c8cc" stroke-width="1.1"/>
<text transform="translate(655.70,538.00) scale(1.0,1)" font-size="10" fill="#c4c8cc" text-anchor="start" font-weight="bold">8</text>
<text transform="translate(680.40,538.00) scale(1.0,1)" font-size="10" fill="#c4c8cc" text-anchor="end" font-weight="bold">2</text>
<line x1="680.3000000000001" y1="539.8" x2="684.3000000000001" y2="531" stroke="#c4c8cc" stroke-width="1.1"/>
<text transform="translate(684.70,538.00) scale(1.0,1)" font-size="10" fill="#c4c8cc" text-anchor="start" font-weight="bold">8</text>
<text transform="translate(709.40,538.00) scale(1.0,1)" font-size="10" fill="#c4c8cc" text-anchor="end" font-weight="bold">4</text>
<line x1="709.3000000000001" y1="539.8" x2="713.3000000000001" y2="531" stroke="#c4c8cc" stroke-width="1.1"/>
<text transform="translate(713.70,538.00) scale(1.0,1)" font-size="10" fill="#c4c8cc" text-anchor="start" font-weight="bold">8</text>
<text transform="translate(738.40,538.00) scale(1.0,1)" font-size="10" fill="#c4c8cc" text-anchor="end" font-weight="bold">8</text>
<line x1="738.3000000000001" y1="539.8" x2="742.3000000000001" y2="531" stroke="#c4c8cc" stroke-width="1.1"/>
<text transform="translate(742.70,538.00) scale(1.0,1)" font-size="10" fill="#c4c8cc" text-anchor="start" font-weight="bold">8</text>
<text transform="translate(768.40,538.00) scale(1.0,1)" font-size="10" fill="#c4c8cc" text-anchor="end" font-weight="bold">8</text>
<line x1="768.3000000000001" y1="539.8" x2="772.3000000000001" y2="531" stroke="#c4c8cc" stroke-width="1.1"/>
<text transform="translate(772.70,538.00) scale(1.0,1)" font-size="10" fill="#c4c8cc" text-anchor="start" font-weight="bold">8</text>
<text transform="translate(797.40,538.00) scale(1.0,1)" font-size="10" fill="#c4c8cc" text-anchor="end" font-weight="bold">8</text>
<line x1="797.3000000000001" y1="539.8" x2="801.3000000000001" y2="531" stroke="#c4c8cc" stroke-width="1.1"/>
<text transform="translate(801.70,538.00) scale(1.0,1)" font-size="10" fill="#c4c8cc" text-anchor="start" font-weight="bold">8</text>
<text transform="translate(826.40,538.00) scale(1.0,1)" font-size="10" fill="#c4c8cc" text-anchor="end" font-weight="bold">8</text>
<line x1="826.3000000000001" y1="539.8" x2="830.3000000000001" y2="531" stroke="#c4c8cc" stroke-width="1.1"/>
<text transform="translate(830.70,538.00) scale(1.0,1)" font-size="10" fill="#c4c8cc" text-anchor="start" font-weight="bold">8</text>
<text transform="translate(855.40,538.00) scale(1.0,1)" font-size="10" fill="#c4c8cc" text-anchor="end" font-weight="bold">8</text>
<line x1="855.3000000000001" y1="539.8" x2="859.3000000000001" y2="531" stroke="#c4c8cc" stroke-width="1.1"/>
<text transform="translate(859.70,538.00) scale(1.0,1)" font-size="10" fill="#c4c8cc" text-anchor="start" font-weight="bold">8</text>
<text transform="translate(885.40,538.00) scale(1.0,1)" font-size="10" fill="#c4c8cc" text-anchor="end" font-weight="bold">8</text>
<line x1="885.3000000000001" y1="539.8" x2="889.3000000000001" y2="531" stroke="#c4c8cc" stroke-width="1.1"/>
<text transform="translate(889.70,538.00) scale(1.0,1)" font-size="10" fill="#c4c8cc" text-anchor="start" font-weight="bold">8</text>
<text transform="translate(914.40,538.00) scale(1.0,1)" font-size="10" fill="#c4c8cc" text-anchor="end" font-weight="bold">8</text>
<line x1="914.3000000000001" y1="539.8" x2="918.3000000000001" y2="531" stroke="#c4c8cc" stroke-width="1.1"/>
<text transform="translate(918.70,538.00) scale(1.0,1)" font-size="10" fill="#c4c8cc" text-anchor="start" font-weight="bold">8</text>
<text transform="translate(943.40,538.00) scale(1.0,1)" font-size="10" fill="#c4c8cc" text-anchor="end" font-weight="bold">0</text>
<line x1="943.3000000000001" y1="539.8" x2="947.3000000000001" y2="531" stroke="#c4c8cc" stroke-width="1.1"/>
<text transform="translate(947.70,538.00) scale(1.0,1)" font-size="10" fill="#c4c8cc" text-anchor="start" font-weight="bold">4</text>
<text transform="translate(973.40,538.00) scale(1.0,1)" font-size="10" fill="#c4c8cc" text-anchor="end" font-weight="bold">4</text>
<line x1="973.3000000000001" y1="539.8" x2="977.3000000000001" y2="531" stroke="#c4c8cc" stroke-width="1.1"/>
<text transform="translate(977.70,538.00) scale(1.0,1)" font-size="10" fill="#c4c8cc" text-anchor="start" font-weight="bold">5</text>
<text transform="translate(1002.40,538.00) scale(1.0,1)" font-size="10" fill="#c4c8cc" text-anchor="end" font-weight="bold">0</text>
<line x1="1002.3000000000001" y1="539.8" x2="1006.3000000000001" y2="531" stroke="#c4c8cc" stroke-width="1.1"/>
<text transform="translate(1006.70,538.00) scale(1.0,1)" font-size="10" fill="#c4c8cc" text-anchor="start" font-weight="bold">8</text>
<text transform="translate(1031.40,538.00) scale(1.0,1)" font-size="10" fill="#c4c8cc" text-anchor="end" font-weight="bold">3</text>
<line x1="1031.3" y1="539.8" x2="1035.3" y2="531" stroke="#c4c8cc" stroke-width="1.1"/>
<text transform="translate(1035.70,538.00) scale(1.0,1)" font-size="10" fill="#c4c8cc" text-anchor="start" font-weight="bold">8</text>
<text transform="translate(1060.40,538.00) scale(1.0,1)" font-size="10" fill="#c4c8cc" text-anchor="end" font-weight="bold">8</text>
<line x1="1060.3" y1="539.8" x2="1064.3" y2="531" stroke="#c4c8cc" stroke-width="1.1"/>
<text transform="translate(1064.70,538.00) scale(1.0,1)" font-size="10" fill="#c4c8cc" text-anchor="start" font-weight="bold">8</text>
<text transform="translate(1090.40,538.00) scale(1.0,1)" font-size="10" fill="#c4c8cc" text-anchor="end" font-weight="bold">8</text>
<line x1="1090.3" y1="539.8" x2="1094.3" y2="531" stroke="#c4c8cc" stroke-width="1.1"/>
<text transform="translate(1094.70,538.00) scale(1.0,1)" font-size="10" fill="#c4c8cc" text-anchor="start" font-weight="bold">8</text>
<text transform="translate(1119.40,538.00) scale(1.0,1)" font-size="10" fill="#c4c8cc" text-anchor="end" font-weight="bold">8</text>
<line x1="1119.3" y1="539.8" x2="1123.3" y2="531" stroke="#c4c8cc" stroke-width="1.1"/>
<text transform="translate(1123.70,538.00) scale(1.0,1)" font-size="10" fill="#c4c8cc" text-anchor="start" font-weight="bold">8</text>
<text transform="translate(1148.40,538.00) scale(1.0,1)" font-size="10" fill="#c4c8cc" text-anchor="end" font-weight="bold">8</text>
<line x1="1148.3" y1="539.8" x2="1152.3" y2="531" stroke="#c4c8cc" stroke-width="1.1"/>
<text transform="translate(1152.70,538.00) scale(1.0,1)" font-size="10" fill="#c4c8cc" text-anchor="start" font-weight="bold">8</text>
<text transform="translate(1177.40,538.00) scale(1.0,1)" font-size="10" fill="#c4c8cc" text-anchor="end" font-weight="bold">8</text>
<line x1="1177.3" y1="539.8" x2="1181.3" y2="531" stroke="#c4c8cc" stroke-width="1.1"/>
<text transform="translate(1181.70,538.00) scale(1.0,1)" font-size="10" fill="#c4c8cc" text-anchor="start" font-weight="bold">8</text>
<text transform="translate(1207.40,538.00) scale(1.0,1)" font-size="10" fill="#c4c8cc" text-anchor="end" font-weight="bold">7</text>
<line x1="1207.3" y1="539.8" x2="1211.3" y2="531" stroke="#c4c8cc" stroke-width="1.1"/>
<text transform="translate(1211.70,538.00) scale(1.0,1)" font-size="10" fill="#c4c8cc" text-anchor="start" font-weight="bold">7</text>
<text transform="translate(1227.50,538.00) scale(1.0,1)" font-size="10" fill="#c4c8cc" text-anchor="start" font-weight="bold">балл обл.</text>
<text transform="translate(1227.50,548.00) scale(1.0,1)" font-size="10" fill="#c4c8cc" text-anchor="start" font-weight="bold" letter-spacing="0.3">ниж/общ</text>
<text transform="translate(1227.30,560.00) scale(1.0,1)" font-size="10" fill="#f2f000" text-anchor="start" font-weight="bold" letter-spacing="0.3">Ветер(10м</text>
<text transform="translate(1227.00,570.00) scale(1.0,1)" font-size="10" fill="#f2f000" text-anchor="start" font-weight="bold">/порыв</text>
<path d="M56.99,573.38 L43.26,556.53 M43.38,562.33 L43.26,556.53 L48.91,557.82" fill="none" stroke="#f2f000" stroke-width="1.8" stroke-linecap="butt" stroke-linejoin="miter"/>
<path d="M84.06,574.27 L74.91,554.59 M73.60,560.24 L74.91,554.59 L80.07,557.23" fill="none" stroke="#f2f000" stroke-width="1.8" stroke-linecap="butt" stroke-linejoin="miter"/>
<path d="M111.40,574.71 L108.65,553.19 M105.69,558.18 L108.65,553.19 L112.77,557.27" fill="none" stroke="#f2f000" stroke-width="1.8" stroke-linecap="butt" stroke-linejoin="miter"/>
<path d="M142.20,574.26 L134.20,554.61 M132.62,560.19 L134.20,554.61 L139.23,557.50" fill="none" stroke="#f2f000" stroke-width="1.8" stroke-linecap="butt" stroke-linejoin="miter"/>
<path d="M174.49,573.39 L160.77,556.92 M160.95,562.72 L160.77,556.92 L166.44,558.15" fill="none" stroke="#f2f000" stroke-width="1.8" stroke-linecap="butt" stroke-linejoin="miter"/>
<path d="M202.53,573.61 L189.46,555.87 M189.30,561.66 L189.46,555.87 L195.05,557.43" fill="none" stroke="#f2f000" stroke-width="1.8" stroke-linecap="butt" stroke-linejoin="miter"/>
<path d="M222.81,573.76 L231.43,553.50 M226.36,556.31 L231.43,553.50 L232.93,559.11" fill="none" stroke="#f2f000" stroke-width="1.8" stroke-linecap="butt" stroke-linejoin="miter"/>
<path d="M248.14,570.27 L265.29,557.23 M259.50,557.15 L265.29,557.23 L263.82,562.83" fill="none" stroke="#f2f000" stroke-width="1.8" stroke-linecap="butt" stroke-linejoin="miter"/>
<path d="M276.30,569.10 L295.21,558.34 M289.47,557.50 L295.21,558.34 L293.00,563.71" fill="none" stroke="#f2f000" stroke-width="1.8" stroke-linecap="butt" stroke-linejoin="miter"/>
<path d="M304.55,565.17 L326.91,562.87 M322.00,559.79 L326.91,562.87 L322.72,566.89" fill="none" stroke="#f2f000" stroke-width="1.8" stroke-linecap="butt" stroke-linejoin="miter"/>
<path d="M334.54,562.85 L356.91,565.60 M352.81,561.50 L356.91,565.60 L351.94,568.59" fill="none" stroke="#f2f000" stroke-width="1.8" stroke-linecap="butt" stroke-linejoin="miter"/>
<path d="M363.89,563.10 L386.06,565.76 M381.95,561.67 L386.06,565.76 L381.09,568.76" fill="none" stroke="#f2f000" stroke-width="1.8" stroke-linecap="butt" stroke-linejoin="miter"/>
<path d="M393.04,562.86 L415.06,565.93 M411.03,561.77 L415.06,565.93 L410.04,568.84" fill="none" stroke="#f2f000" stroke-width="1.8" stroke-linecap="butt" stroke-linejoin="miter"/>
<path d="M422.04,562.87 L444.41,566.32 M440.44,562.09 L444.41,566.32 L439.35,569.15" fill="none" stroke="#f2f000" stroke-width="1.8" stroke-linecap="butt" stroke-linejoin="miter"/>
<path d="M452.26,560.76 L473.26,567.87 M470.08,563.02 L473.26,567.87 L467.79,569.78" fill="none" stroke="#f2f000" stroke-width="1.8" stroke-linecap="butt" stroke-linejoin="miter"/>
<path d="M481.95,559.40 L501.46,570.51 M499.25,565.14 L501.46,570.51 L495.72,571.35" fill="none" stroke="#f2f000" stroke-width="1.8" stroke-linecap="butt" stroke-linejoin="miter"/>
<path d="M515.61,555.61 L525.71,575.68 M526.84,569.99 L525.71,575.68 L520.47,573.20" fill="none" stroke="#f2f000" stroke-width="1.8" stroke-linecap="butt" stroke-linejoin="miter"/>
<path d="M547.10,555.02 L552.79,576.59 M555.08,571.26 L552.79,576.59 L548.18,573.08" fill="none" stroke="#f2f000" stroke-width="1.8" stroke-linecap="butt" stroke-linejoin="miter"/>
<path d="M616.22,559.92 L597.27,571.76 M603.04,572.37 L597.27,571.76 L599.25,566.31" fill="none" stroke="#f2f000" stroke-width="1.8" stroke-linecap="butt" stroke-linejoin="miter"/>
<path d="M646.47,563.19 L624.92,568.32 M630.19,570.74 L624.92,568.32 L628.54,563.79" fill="none" stroke="#f2f000" stroke-width="1.8" stroke-linecap="butt" stroke-linejoin="miter"/>
<path d="M676.70,565.27 L654.30,565.73 M658.94,569.20 L654.30,565.73 L658.80,562.06" fill="none" stroke="#f2f000" stroke-width="1.8" stroke-linecap="butt" stroke-linejoin="miter"/>
<path d="M705.71,563.74 L683.68,567.55 M688.79,570.29 L683.68,567.55 L687.58,563.25" fill="none" stroke="#f2f000" stroke-width="1.8" stroke-linecap="butt" stroke-linejoin="miter"/>
<path d="M734.27,561.09 L713.84,570.59 M719.49,571.90 L713.84,570.59 L716.48,565.43" fill="none" stroke="#f2f000" stroke-width="1.8" stroke-linecap="butt" stroke-linejoin="miter"/>
<path d="M757.25,556.01 L750.38,576.86 M755.20,573.64 L750.38,576.86 L748.42,571.40" fill="none" stroke="#f2f000" stroke-width="1.8" stroke-linecap="butt" stroke-linejoin="miter"/>
<path d="M786.35,555.29 L782.12,577.42 M786.49,573.60 L782.12,577.42 L779.47,572.26" fill="none" stroke="#f2f000" stroke-width="1.8" stroke-linecap="butt" stroke-linejoin="miter"/>
<path d="M809.65,555.26 L816.53,576.61 M818.53,571.16 L816.53,576.61 L811.73,573.35" fill="none" stroke="#f2f000" stroke-width="1.8" stroke-linecap="butt" stroke-linejoin="miter"/>
<path d="M836.91,555.94 L848.14,575.07 M848.91,569.32 L848.14,575.07 L842.75,572.93" fill="none" stroke="#f2f000" stroke-width="1.8" stroke-linecap="butt" stroke-linejoin="miter"/>
<path d="M866.70,555.91 L879.33,574.75 M879.75,568.97 L879.33,574.75 L873.82,572.95" fill="none" stroke="#f2f000" stroke-width="1.8" stroke-linecap="butt" stroke-linejoin="miter"/>
<path d="M891.96,559.86 L912.43,570.21 M909.96,564.96 L912.43,570.21 L906.74,571.33" fill="none" stroke="#f2f000" stroke-width="1.8" stroke-linecap="butt" stroke-linejoin="miter"/>
<path d="M920.12,568.25 L940.42,558.52 M934.75,557.28 L940.42,558.52 L937.84,563.72" fill="none" stroke="#f2f000" stroke-width="1.8" stroke-linecap="butt" stroke-linejoin="miter"/>
<path d="M963.55,573.59 L950.68,554.99 M950.34,560.78 L950.68,554.99 L956.22,556.72" fill="none" stroke="#f2f000" stroke-width="1.8" stroke-linecap="butt" stroke-linejoin="miter"/>
<path d="M995.40,571.87 L979.00,557.54 M980.09,563.24 L979.00,557.54 L984.79,557.86" fill="none" stroke="#f2f000" stroke-width="1.8" stroke-linecap="butt" stroke-linejoin="miter"/>
<path d="M1026.18,569.90 L1006.08,560.03 M1008.61,565.25 L1006.08,560.03 L1011.75,558.84" fill="none" stroke="#f2f000" stroke-width="1.8" stroke-linecap="butt" stroke-linejoin="miter"/>
<path d="M1053.40,571.87 L1037.14,557.30 M1038.17,563.01 L1037.14,557.30 L1042.93,557.69" fill="none" stroke="#ff3010" stroke-width="1.8" stroke-linecap="butt" stroke-linejoin="miter"/>
<path d="M1077.85,574.49 L1070.97,553.54 M1069.01,559.00 L1070.97,553.54 L1075.79,556.77" fill="none" stroke="#ff3010" stroke-width="1.8" stroke-linecap="butt" stroke-linejoin="miter"/>
<path d="M1106.16,574.71 L1103.64,552.69 M1100.61,557.64 L1103.64,552.69 L1107.70,556.83" fill="none" stroke="#f2f000" stroke-width="1.8" stroke-linecap="butt" stroke-linejoin="miter"/>
<path d="M1106.16,574.71 L1103.64,552.69" stroke="#ff6a10" stroke-width="0.9" stroke-dasharray="1.2,2.2"/>
<path d="M1135.45,574.46 L1131.47,552.93 M1128.79,558.07 L1131.47,552.93 L1135.81,556.77" fill="none" stroke="#f2f000" stroke-width="1.8" stroke-linecap="butt" stroke-linejoin="miter"/>
<path d="M1135.45,574.46 L1131.47,552.93" stroke="#ff6a10" stroke-width="0.9" stroke-dasharray="1.2,2.2"/>
<path d="M1155.03,570.61 L1173.06,556.49 M1167.26,556.50 L1173.06,556.49 L1171.66,562.12" fill="none" stroke="#f2f000" stroke-width="1.8" stroke-linecap="butt" stroke-linejoin="miter"/>
<path d="M1184.15,570.28 L1202.13,557.21 M1196.33,557.01 L1202.13,557.21 L1200.53,562.78" fill="none" stroke="#f2f000" stroke-width="1.8" stroke-linecap="butt" stroke-linejoin="miter"/>
<text transform="translate(70.80,559.00) scale(1.12,1)" font-size="10" fill="#f2f000" text-anchor="end" font-weight="bold">3</text>
<line x1="60.6" y1="581.6" x2="65.1" y2="573" stroke="#f2f000" stroke-width="1.3"/>
<text transform="translate(65.20,580.00) scale(1.05,1)" font-size="10" fill="#f2f000" text-anchor="start" font-weight="bold">6</text>
<text transform="translate(99.80,559.00) scale(1.12,1)" font-size="10" fill="#f2f000" text-anchor="end" font-weight="bold">4</text>
<line x1="89.6" y1="581.6" x2="94.1" y2="573" stroke="#f2f000" stroke-width="1.3"/>
<text transform="translate(94.20,580.00) scale(1.05,1)" font-size="10" fill="#f2f000" text-anchor="start" font-weight="bold">8</text>
<text transform="translate(129.80,559.00) scale(1.12,1)" font-size="10" fill="#f2f000" text-anchor="end" font-weight="bold">4</text>
<line x1="119.6" y1="581.6" x2="124.1" y2="573" stroke="#f2f000" stroke-width="1.3"/>
<text transform="translate(124.20,580.00) scale(1.05,1)" font-size="10" fill="#f2f000" text-anchor="start" font-weight="bold">9</text>
<text transform="translate(158.80,559.00) scale(1.12,1)" font-size="10" fill="#f2f000" text-anchor="end" font-weight="bold">4</text>
<line x1="148.6" y1="581.6" x2="153.1" y2="573" stroke="#f2f000" stroke-width="1.3"/>
<text transform="translate(153.20,580.00) scale(1.05,1)" font-size="10" fill="#f2f000" text-anchor="start" font-weight="bold">8</text>
<text transform="translate(187.80,559.00) scale(1.12,1)" font-size="10" fill="#f2f000" text-anchor="end" font-weight="bold">3</text>
<line x1="177.6" y1="581.6" x2="182.1" y2="573" stroke="#f2f000" stroke-width="1.3"/>
<text transform="translate(182.20,580.00) scale(1.05,1)" font-size="10" fill="#f2f000" text-anchor="start" font-weight="bold">7</text>
<text transform="translate(216.80,559.00) scale(1.12,1)" font-size="10" fill="#f2f000" text-anchor="end" font-weight="bold">3</text>
<line x1="206.6" y1="581.6" x2="211.1" y2="573" stroke="#f2f000" stroke-width="1.3"/>
<text transform="translate(211.20,580.00) scale(1.05,1)" font-size="10" fill="#f2f000" text-anchor="start" font-weight="bold">6</text>
<text transform="translate(246.80,559.00) scale(1.12,1)" font-size="10" fill="#f2f000" text-anchor="end" font-weight="bold">2</text>
<line x1="236.6" y1="581.6" x2="241.1" y2="573" stroke="#f2f000" stroke-width="1.3"/>
<text transform="translate(241.20,580.00) scale(1.05,1)" font-size="10" fill="#f2f000" text-anchor="start" font-weight="bold">6</text>
<text transform="translate(275.80,559.00) scale(1.12,1)" font-size="10" fill="#f2f000" text-anchor="end" font-weight="bold">2</text>
<line x1="265.6" y1="581.6" x2="270.1" y2="573" stroke="#f2f000" stroke-width="1.3"/>
<text transform="translate(270.20,580.00) scale(1.05,1)" font-size="10" fill="#f2f000" text-anchor="start" font-weight="bold">5</text>
<text transform="translate(304.80,559.00) scale(1.12,1)" font-size="10" fill="#f2f000" text-anchor="end" font-weight="bold">3</text>
<line x1="294.6" y1="581.6" x2="299.1" y2="573" stroke="#f2f000" stroke-width="1.3"/>
<text transform="translate(299.20,580.00) scale(1.05,1)" font-size="10" fill="#f2f000" text-anchor="start" font-weight="bold">7</text>
<text transform="translate(334.80,559.00) scale(1.12,1)" font-size="10" fill="#f2f000" text-anchor="end" font-weight="bold">4</text>
<line x1="324.6" y1="581.6" x2="329.1" y2="573" stroke="#f2f000" stroke-width="1.3"/>
<text transform="translate(329.20,580.00) scale(1.05,1)" font-size="10" fill="#f2f000" text-anchor="start" font-weight="bold">8</text>
<text transform="translate(363.80,559.00) scale(1.12,1)" font-size="10" fill="#f2f000" text-anchor="end" font-weight="bold">4</text>
<line x1="353.6" y1="581.6" x2="358.1" y2="573" stroke="#f2f000" stroke-width="1.3"/>
<text transform="translate(358.20,580.00) scale(1.05,1)" font-size="10" fill="#f2f000" text-anchor="start" font-weight="bold">10</text>
<text transform="translate(392.80,559.00) scale(1.12,1)" font-size="10" fill="#f2f000" text-anchor="end" font-weight="bold">4</text>
<line x1="382.6" y1="581.6" x2="387.1" y2="573" stroke="#f2f000" stroke-width="1.3"/>
<text transform="translate(387.20,580.00) scale(1.05,1)" font-size="10" fill="#f2f000" text-anchor="start" font-weight="bold">9</text>
<text transform="translate(421.80,559.00) scale(1.12,1)" font-size="10" fill="#f2f000" text-anchor="end" font-weight="bold">3</text>
<line x1="411.6" y1="581.6" x2="416.1" y2="573" stroke="#f2f000" stroke-width="1.3"/>
<text transform="translate(416.20,580.00) scale(1.05,1)" font-size="10" fill="#f2f000" text-anchor="start" font-weight="bold">8</text>
<text transform="translate(451.80,559.00) scale(1.12,1)" font-size="10" fill="#f2f000" text-anchor="end" font-weight="bold">3</text>
<line x1="441.6" y1="581.6" x2="446.1" y2="573" stroke="#f2f000" stroke-width="1.3"/>
<text transform="translate(446.20,580.00) scale(1.05,1)" font-size="10" fill="#f2f000" text-anchor="start" font-weight="bold">7</text>
<text transform="translate(480.80,559.00) scale(1.12,1)" font-size="10" fill="#f2f000" text-anchor="end" font-weight="bold">3</text>
<line x1="470.6" y1="581.6" x2="475.1" y2="573" stroke="#f2f000" stroke-width="1.3"/>
<text transform="translate(475.20,580.00) scale(1.05,1)" font-size="10" fill="#f2f000" text-anchor="start" font-weight="bold">7</text>
<text transform="translate(509.80,559.00) scale(1.12,1)" font-size="10" fill="#f2f000" text-anchor="end" font-weight="bold">2</text>
<line x1="499.6" y1="581.6" x2="504.1" y2="573" stroke="#f2f000" stroke-width="1.3"/>
<text transform="translate(504.20,580.00) scale(1.05,1)" font-size="10" fill="#f2f000" text-anchor="start" font-weight="bold">6</text>
<text transform="translate(538.80,559.00) scale(1.12,1)" font-size="10" fill="#f2f000" text-anchor="end" font-weight="bold">2</text>
<line x1="528.6" y1="581.6" x2="533.1" y2="573" stroke="#f2f000" stroke-width="1.3"/>
<text transform="translate(533.20,580.00) scale(1.05,1)" font-size="10" fill="#f2f000" text-anchor="start" font-weight="bold">4</text>
<text transform="translate(568.80,559.00) scale(1.12,1)" font-size="10" fill="#f2f000" text-anchor="end" font-weight="bold">1</text>
<line x1="558.6" y1="581.6" x2="563.1" y2="573" stroke="#f2f000" stroke-width="1.3"/>
<text transform="translate(563.20,580.00) scale(1.05,1)" font-size="10" fill="#f2f000" text-anchor="start" font-weight="bold">4</text>
<text transform="translate(597.80,559.00) scale(1.12,1)" font-size="10" fill="#f2f000" text-anchor="end" font-weight="bold">0</text>
<line x1="587.6" y1="581.6" x2="592.1" y2="573" stroke="#f2f000" stroke-width="1.3"/>
<text transform="translate(592.20,580.00) scale(1.05,1)" font-size="10" fill="#f2f000" text-anchor="start" font-weight="bold">3</text>
<text transform="translate(626.80,559.00) scale(1.12,1)" font-size="10" fill="#f2f000" text-anchor="end" font-weight="bold">1</text>
<line x1="616.6" y1="581.6" x2="621.1" y2="573" stroke="#f2f000" stroke-width="1.3"/>
<text transform="translate(621.20,580.00) scale(1.05,1)" font-size="10" fill="#f2f000" text-anchor="start" font-weight="bold">2</text>
<text transform="translate(656.80,559.00) scale(1.12,1)" font-size="10" fill="#f2f000" text-anchor="end" font-weight="bold">2</text>
<line x1="646.6" y1="581.6" x2="651.1" y2="573" stroke="#f2f000" stroke-width="1.3"/>
<text transform="translate(651.20,580.00) scale(1.05,1)" font-size="10" fill="#f2f000" text-anchor="start" font-weight="bold">3</text>
<text transform="translate(685.80,559.00) scale(1.12,1)" font-size="10" fill="#f2f000" text-anchor="end" font-weight="bold">2</text>
<line x1="675.6" y1="581.6" x2="680.1" y2="573" stroke="#f2f000" stroke-width="1.3"/>
<text transform="translate(680.20,580.00) scale(1.05,1)" font-size="10" fill="#f2f000" text-anchor="start" font-weight="bold">5</text>
<text transform="translate(714.80,559.00) scale(1.12,1)" font-size="10" fill="#f2f000" text-anchor="end" font-weight="bold">2</text>
<line x1="704.6" y1="581.6" x2="709.1" y2="573" stroke="#f2f000" stroke-width="1.3"/>
<text transform="translate(709.20,580.00) scale(1.05,1)" font-size="10" fill="#f2f000" text-anchor="start" font-weight="bold">5</text>
<text transform="translate(743.80,559.00) scale(1.12,1)" font-size="10" fill="#f2f000" text-anchor="end" font-weight="bold">3</text>
<line x1="733.6" y1="581.6" x2="738.1" y2="573" stroke="#f2f000" stroke-width="1.3"/>
<text transform="translate(738.20,580.00) scale(1.05,1)" font-size="10" fill="#f2f000" text-anchor="start" font-weight="bold">6</text>
<text transform="translate(773.80,559.00) scale(1.12,1)" font-size="10" fill="#f2f000" text-anchor="end" font-weight="bold">3</text>
<line x1="763.6" y1="581.6" x2="768.1" y2="573" stroke="#f2f000" stroke-width="1.3"/>
<text transform="translate(768.20,580.00) scale(1.05,1)" font-size="10" fill="#f2f000" text-anchor="start" font-weight="bold">6</text>
<text transform="translate(802.80,559.00) scale(1.12,1)" font-size="10" fill="#f2f000" text-anchor="end" font-weight="bold">4</text>
<line x1="792.6" y1="581.6" x2="797.1" y2="573" stroke="#f2f000" stroke-width="1.3"/>
<text transform="translate(797.20,580.00) scale(1.05,1)" font-size="10" fill="#f2f000" text-anchor="start" font-weight="bold">8</text>
<text transform="translate(831.80,559.00) scale(1.12,1)" font-size="10" fill="#f2f000" text-anchor="end" font-weight="bold">4</text>
<line x1="821.6" y1="581.6" x2="826.1" y2="573" stroke="#f2f000" stroke-width="1.3"/>
<text transform="translate(826.20,580.00) scale(1.05,1)" font-size="10" fill="#f2f000" text-anchor="start" font-weight="bold">9</text>
<text transform="translate(860.80,559.00) scale(1.12,1)" font-size="10" fill="#f2f000" text-anchor="end" font-weight="bold">3</text>
<line x1="850.6" y1="581.6" x2="855.1" y2="573" stroke="#f2f000" stroke-width="1.3"/>
<text transform="translate(855.20,580.00) scale(1.05,1)" font-size="10" fill="#f2f000" text-anchor="start" font-weight="bold">9</text>
<text transform="translate(890.80,559.00) scale(1.12,1)" font-size="10" fill="#f2f000" text-anchor="end" font-weight="bold">2</text>
<line x1="880.6" y1="581.6" x2="885.1" y2="573" stroke="#f2f000" stroke-width="1.3"/>
<text transform="translate(885.20,580.00) scale(1.05,1)" font-size="10" fill="#f2f000" text-anchor="start" font-weight="bold">8</text>
<text transform="translate(919.80,559.00) scale(1.12,1)" font-size="10" fill="#f2f000" text-anchor="end" font-weight="bold">2</text>
<line x1="909.6" y1="581.6" x2="914.1" y2="573" stroke="#f2f000" stroke-width="1.3"/>
<text transform="translate(914.20,580.00) scale(1.05,1)" font-size="10" fill="#f2f000" text-anchor="start" font-weight="bold">5</text>
<text transform="translate(948.80,559.00) scale(1.12,1)" font-size="10" fill="#f2f000" text-anchor="end" font-weight="bold">1</text>
<line x1="938.6" y1="581.6" x2="943.1" y2="573" stroke="#f2f000" stroke-width="1.3"/>
<text transform="translate(943.20,580.00) scale(1.05,1)" font-size="10" fill="#f2f000" text-anchor="start" font-weight="bold">4</text>
<text transform="translate(978.80,559.00) scale(1.12,1)" font-size="10" fill="#f2f000" text-anchor="end" font-weight="bold">1</text>
<line x1="968.6" y1="581.6" x2="973.1" y2="573" stroke="#f2f000" stroke-width="1.3"/>
<text transform="translate(973.20,580.00) scale(1.05,1)" font-size="10" fill="#f2f000" text-anchor="start" font-weight="bold">3</text>
<text transform="translate(1007.80,559.00) scale(1.12,1)" font-size="10" fill="#f2f000" text-anchor="end" font-weight="bold">2</text>
<line x1="997.6" y1="581.6" x2="1002.1" y2="573" stroke="#f2f000" stroke-width="1.3"/>
<text transform="translate(1002.20,580.00) scale(1.05,1)" font-size="10" fill="#f2f000" text-anchor="start" font-weight="bold">5</text>
<text transform="translate(1036.80,559.00) scale(1.12,1)" font-size="10" fill="#f2f000" text-anchor="end" font-weight="bold">4</text>
<line x1="1026.6" y1="581.6" x2="1031.1" y2="573" stroke="#f2f000" stroke-width="1.3"/>
<text transform="translate(1031.20,580.00) scale(1.05,1)" font-size="10" fill="#f2f000" text-anchor="start" font-weight="bold">8</text>
<text transform="translate(1065.80,559.00) scale(1.12,1)" font-size="10" fill="#f2f000" text-anchor="end" font-weight="bold">6</text>
<line x1="1055.6" y1="581.6" x2="1060.1" y2="573" stroke="#f2f000" stroke-width="1.3"/>
<text transform="translate(1060.20,580.00) scale(1.05,1)" font-size="10" fill="#f2f000" text-anchor="start" font-weight="bold">13</text>
<text transform="translate(1095.80,559.00) scale(1.12,1)" font-size="10" fill="#f2f000" text-anchor="end" font-weight="bold">6</text>
<line x1="1085.6" y1="581.6" x2="1090.1" y2="573" stroke="#f2f000" stroke-width="1.3"/>
<text transform="translate(1090.20,580.00) scale(1.05,1)" font-size="10" fill="#f2f000" text-anchor="start" font-weight="bold">13</text>
<text transform="translate(1124.80,559.00) scale(1.12,1)" font-size="10" fill="#f2f000" text-anchor="end" font-weight="bold">3</text>
<line x1="1114.6" y1="581.6" x2="1119.1" y2="573" stroke="#f2f000" stroke-width="1.3"/>
<text transform="translate(1119.20,580.00) scale(1.05,1)" font-size="10" fill="#f2f000" text-anchor="start" font-weight="bold">11</text>
<text transform="translate(1153.80,559.00) scale(1.12,1)" font-size="10" fill="#f2f000" text-anchor="end" font-weight="bold">3</text>
<line x1="1143.6" y1="581.6" x2="1148.1" y2="573" stroke="#f2f000" stroke-width="1.3"/>
<text transform="translate(1148.20,580.00) scale(1.05,1)" font-size="10" fill="#f2f000" text-anchor="start" font-weight="bold">7</text>
<text transform="translate(1182.80,559.00) scale(1.12,1)" font-size="10" fill="#f2f000" text-anchor="end" font-weight="bold">3</text>
<line x1="1172.6" y1="581.6" x2="1177.1" y2="573" stroke="#f2f000" stroke-width="1.3"/>
<text transform="translate(1177.20,580.00) scale(1.05,1)" font-size="10" fill="#f2f000" text-anchor="start" font-weight="bold">7</text>
<text transform="translate(1212.80,559.00) scale(1.12,1)" font-size="10" fill="#f2f000" text-anchor="end" font-weight="bold">3</text>
<line x1="1202.6" y1="581.6" x2="1207.1" y2="573" stroke="#f2f000" stroke-width="1.3"/>
<text transform="translate(1207.20,580.00) scale(1.05,1)" font-size="10" fill="#f2f000" text-anchor="start" font-weight="bold">7</text>
<text transform="translate(2.20,588.00) scale(1.15,1)" font-size="11.5" fill="#ffffff" text-anchor="start" font-weight="bold">10km</text>
<text transform="translate(2.20,627.00) scale(1.15,1)" font-size="11.5" fill="#ffffff" text-anchor="start" font-weight="bold">8km</text>
<text transform="translate(2.20,665.00) scale(1.15,1)" font-size="11.5" fill="#ffffff" text-anchor="start" font-weight="bold">6km</text>
<text transform="translate(2.20,703.00) scale(1.15,1)" font-size="11.5" fill="#ffffff" text-anchor="start" font-weight="bold">4km</text>
<text transform="translate(2.20,742.00) scale(1.15,1)" font-size="11.5" fill="#ffffff" text-anchor="start" font-weight="bold">2km</text>
<text transform="translate(28.50,790.00) scale(1.15,1)" font-size="10.5" fill="#ffffff" text-anchor="middle" font-weight="bold">0</text>
<text transform="translate(54.30,790.00) scale(1.1,1)" font-size="10.5" fill="#ffffff" text-anchor="start" font-weight="bold">3</text>
<text transform="translate(83.30,790.00) scale(1.1,1)" font-size="10.5" fill="#ffffff" text-anchor="start" font-weight="bold">6</text>
<text transform="translate(112.30,790.00) scale(1.1,1)" font-size="10.5" fill="#ffffff" text-anchor="start" font-weight="bold">9</text>
<text transform="translate(142.30,790.00) scale(1.1,1)" font-size="10.5" fill="#ffffff" text-anchor="start" font-weight="bold">12</text>
<text transform="translate(171.30,790.00) scale(1.1,1)" font-size="10.5" fill="#ffffff" text-anchor="start" font-weight="bold">15</text>
<text transform="translate(200.30,790.00) scale(1.1,1)" font-size="10.5" fill="#ffffff" text-anchor="start" font-weight="bold">18</text>
<text transform="translate(229.30,790.00) scale(1.1,1)" font-size="10.5" fill="#ffffff" text-anchor="start" font-weight="bold">21</text>
<text transform="translate(259.30,790.00) scale(1.1,1)" font-size="10.5" fill="#ffffff" text-anchor="start" font-weight="bold">24</text>
<text transform="translate(288.30,790.00) scale(1.1,1)" font-size="10.5" fill="#ffffff" text-anchor="start" font-weight="bold">27</text>
<text transform="translate(317.30,790.00) scale(1.1,1)" font-size="10.5" fill="#ffffff" text-anchor="start" font-weight="bold">30</text>
<text transform="translate(347.30,790.00) scale(1.1,1)" font-size="10.5" fill="#ffffff" text-anchor="start" font-weight="bold">33</text>
<text transform="translate(376.30,790.00) scale(1.1,1)" font-size="10.5" fill="#ffffff" text-anchor="start" font-weight="bold">36</text>
<text transform="translate(405.30,790.00) scale(1.1,1)" font-size="10.5" fill="#ffffff" text-anchor="start" font-weight="bold">39</text>
<text transform="translate(434.30,790.00) scale(1.1,1)" font-size="10.5" fill="#ffffff" text-anchor="start" font-weight="bold">42</text>
<text transform="translate(464.30,790.00) scale(1.1,1)" font-size="10.5" fill="#ffffff" text-anchor="start" font-weight="bold">45</text>
<text transform="translate(493.30,790.00) scale(1.1,1)" font-size="10.5" fill="#ffffff" text-anchor="start" font-weight="bold">48</text>
<text transform="translate(522.30,790.00) scale(1.1,1)" font-size="10.5" fill="#ffffff" text-anchor="start" font-weight="bold">51</text>
<text transform="translate(551.30,790.00) scale(1.1,1)" font-size="10.5" fill="#ffffff" text-anchor="start" font-weight="bold">54</text>
<text transform="translate(581.30,790.00) scale(1.1,1)" font-size="10.5" fill="#ffffff" text-anchor="start" font-weight="bold">57</text>
<text transform="translate(610.30,790.00) scale(1.1,1)" font-size="10.5" fill="#ffffff" text-anchor="start" font-weight="bold">60</text>
<text transform="translate(639.30,790.00) scale(1.1,1)" font-size="10.5" fill="#ffffff" text-anchor="start" font-weight="bold">63</text>
<text transform="translate(669.30,790.00) scale(1.1,1)" font-size="10.5" fill="#ffffff" text-anchor="start" font-weight="bold">66</text>
<text transform="translate(698.30,790.00) scale(1.1,1)" font-size="10.5" fill="#ffffff" text-anchor="start" font-weight="bold">69</text>
<text transform="translate(727.30,790.00) scale(1.1,1)" font-size="10.5" fill="#ffffff" text-anchor="start" font-weight="bold">72</text>
<text transform="translate(756.30,790.00) scale(1.1,1)" font-size="10.5" fill="#ffffff" text-anchor="start" font-weight="bold">75</text>
<text transform="translate(786.30,790.00) scale(1.1,1)" font-size="10.5" fill="#ffffff" text-anchor="start" font-weight="bold">78</text>
<text transform="translate(815.30,790.00) scale(1.1,1)" font-size="10.5" fill="#ffffff" text-anchor="start" font-weight="bold">81</text>
<text transform="translate(844.30,790.00) scale(1.1,1)" font-size="10.5" fill="#ffffff" text-anchor="start" font-weight="bold">84</text>
<text transform="translate(873.30,790.00) scale(1.1,1)" font-size="10.5" fill="#ffffff" text-anchor="start" font-weight="bold">87</text>
<text transform="translate(903.30,790.00) scale(1.1,1)" font-size="10.5" fill="#ffffff" text-anchor="start" font-weight="bold">90</text>
<text transform="translate(932.30,790.00) scale(1.1,1)" font-size="10.5" fill="#ffffff" text-anchor="start" font-weight="bold">93</text>
<text transform="translate(961.30,790.00) scale(1.1,1)" font-size="10.5" fill="#ffffff" text-anchor="start" font-weight="bold">96</text>
<text transform="translate(991.30,790.00) scale(1.1,1)" font-size="10.5" fill="#ffffff" text-anchor="start" font-weight="bold">99</text>
<text transform="translate(1020.30,790.00) scale(1.18,1)" font-size="10.5" fill="#ffffff" text-anchor="start" font-weight="bold">102</text>
<text transform="translate(1049.30,790.00) scale(1.18,1)" font-size="10.5" fill="#ffffff" text-anchor="start" font-weight="bold">105</text>
<text transform="translate(1078.30,790.00) scale(1.18,1)" font-size="10.5" fill="#ffffff" text-anchor="start" font-weight="bold">108</text>
<text transform="translate(1108.30,790.00) scale(1.18,1)" font-size="10.5" fill="#ffffff" text-anchor="start" font-weight="bold">111</text>
<text transform="translate(1137.30,790.00) scale(1.18,1)" font-size="10.5" fill="#ffffff" text-anchor="start" font-weight="bold">114</text>
<text transform="translate(1166.30,790.00) scale(1.18,1)" font-size="10.5" fill="#ffffff" text-anchor="start" font-weight="bold">117</text>
<text transform="translate(1195.30,790.00) scale(1.18,1)" font-size="10.5" fill="#ffffff" text-anchor="start" font-weight="bold">120</text>
<rect x="53.5" y="750.5" width="8" height="6.0" fill="rgba(150,160,175,0.38)" stroke="#a8a8a8" stroke-width="1.3"/>
<line x1="49.0" y1="750.5" x2="66.0" y2="750.5" stroke="#a8a8a8" stroke-width="1.2"/>
<line x1="49.0" y1="756.5" x2="66.0" y2="756.5" stroke="#a8a8a8" stroke-width="1.2"/>
<line x1="78.0" y1="780.5" x2="95.0" y2="780.5" stroke="#a8a8a8" stroke-width="1.2"/>
<line x1="78.0" y1="780.5" x2="95.0" y2="780.5" stroke="#a8a8a8" stroke-width="1.2"/>
<rect x="112.5" y="767.5" width="8" height="6.0" fill="rgba(150,160,175,0.38)" stroke="#a8a8a8" stroke-width="1.3"/>
<line x1="108.0" y1="767.5" x2="125.0" y2="767.5" stroke="#a8a8a8" stroke-width="1.2"/>
<line x1="108.0" y1="773.5" x2="125.0" y2="773.5" stroke="#a8a8a8" stroke-width="1.2"/>
<rect x="141.5" y="765.5" width="8" height="8.0" fill="rgba(150,160,175,0.38)" stroke="#a8a8a8" stroke-width="1.3"/>
<line x1="137.0" y1="765.5" x2="154.0" y2="765.5" stroke="#a8a8a8" stroke-width="1.2"/>
<line x1="137.0" y1="773.5" x2="154.0" y2="773.5" stroke="#a8a8a8" stroke-width="1.2"/>
<rect x="170.5" y="696.5" width="8" height="12.0" fill="rgba(150,160,175,0.38)" stroke="#a8a8a8" stroke-width="1.3"/>
<line x1="166.0" y1="696.5" x2="183.0" y2="696.5" stroke="#a8a8a8" stroke-width="1.2"/>
<line x1="166.0" y1="708.5" x2="183.0" y2="708.5" stroke="#a8a8a8" stroke-width="1.2"/>
<rect x="199.5" y="676.5" width="8" height="80.0" fill="rgba(150,160,175,0.38)" stroke="#a8a8a8" stroke-width="1.3"/>
<line x1="195.0" y1="676.5" x2="212.0" y2="676.5" stroke="#a8a8a8" stroke-width="1.2"/>
<line x1="195.0" y1="756.5" x2="212.0" y2="756.5" stroke="#a8a8a8" stroke-width="1.2"/>
<rect x="229.5" y="768.5" width="8" height="4.0" fill="rgba(150,160,175,0.38)" stroke="#a8a8a8" stroke-width="1.3"/>
<line x1="225.0" y1="768.5" x2="242.0" y2="768.5" stroke="#a8a8a8" stroke-width="1.2"/>
<line x1="225.0" y1="772.5" x2="242.0" y2="772.5" stroke="#a8a8a8" stroke-width="1.2"/>
<rect x="258.5" y="767.5" width="8" height="8.0" fill="rgba(150,160,175,0.38)" stroke="#a8a8a8" stroke-width="1.3"/>
<line x1="254.0" y1="767.5" x2="271.0" y2="767.5" stroke="#a8a8a8" stroke-width="1.2"/>
<line x1="254.0" y1="775.5" x2="271.0" y2="775.5" stroke="#a8a8a8" stroke-width="1.2"/>
<rect x="287.5" y="772.5" width="8" height="3.0" fill="rgba(150,160,175,0.38)" stroke="#a8a8a8" stroke-width="1.3"/>
<line x1="283.0" y1="772.5" x2="300.0" y2="772.5" stroke="#a8a8a8" stroke-width="1.2"/>
<line x1="283.0" y1="775.5" x2="300.0" y2="775.5" stroke="#a8a8a8" stroke-width="1.2"/>
<rect x="317.5" y="767.5" width="8" height="8.0" fill="rgba(150,160,175,0.38)" stroke="#a8a8a8" stroke-width="1.3"/>
<line x1="313.0" y1="767.5" x2="330.0" y2="767.5" stroke="#a8a8a8" stroke-width="1.2"/>
<line x1="313.0" y1="775.5" x2="330.0" y2="775.5" stroke="#a8a8a8" stroke-width="1.2"/>
<rect x="346.5" y="764.5" width="8" height="10.0" fill="rgba(150,160,175,0.38)" stroke="#a8a8a8" stroke-width="1.3"/>
<line x1="342.0" y1="764.5" x2="359.0" y2="764.5" stroke="#a8a8a8" stroke-width="1.2"/>
<line x1="342.0" y1="774.5" x2="359.0" y2="774.5" stroke="#a8a8a8" stroke-width="1.2"/>
<rect x="375.5" y="764.5" width="8" height="10.0" fill="rgba(150,160,175,0.38)" stroke="#a8a8a8" stroke-width="1.3"/>
<line x1="371.0" y1="764.5" x2="388.0" y2="764.5" stroke="#a8a8a8" stroke-width="1.2"/>
<line x1="371.0" y1="774.5" x2="388.0" y2="774.5" stroke="#a8a8a8" stroke-width="1.2"/>
<rect x="404.5" y="762.5" width="8" height="10.0" fill="rgba(150,160,175,0.38)" stroke="#a8a8a8" stroke-width="1.3"/>
<line x1="400.0" y1="762.5" x2="417.0" y2="762.5" stroke="#a8a8a8" stroke-width="1.2"/>
<line x1="400.0" y1="772.5" x2="417.0" y2="772.5" stroke="#a8a8a8" stroke-width="1.2"/>
<rect x="434.5" y="767.5" width="8" height="5.0" fill="rgba(150,160,175,0.38)" stroke="#a8a8a8" stroke-width="1.3"/>
<line x1="430.0" y1="767.5" x2="447.0" y2="767.5" stroke="#a8a8a8" stroke-width="1.2"/>
<line x1="430.0" y1="772.5" x2="447.0" y2="772.5" stroke="#a8a8a8" stroke-width="1.2"/>
<rect x="463.5" y="767.5" width="8" height="7.0" fill="rgba(150,160,175,0.38)" stroke="#a8a8a8" stroke-width="1.3"/>
<line x1="459.0" y1="767.5" x2="476.0" y2="767.5" stroke="#a8a8a8" stroke-width="1.2"/>
<line x1="459.0" y1="774.5" x2="476.0" y2="774.5" stroke="#a8a8a8" stroke-width="1.2"/>
<rect x="492.5" y="761.5" width="8" height="13.0" fill="rgba(150,160,175,0.38)" stroke="#a8a8a8" stroke-width="1.3"/>
<line x1="488.0" y1="761.5" x2="505.0" y2="761.5" stroke="#a8a8a8" stroke-width="1.2"/>
<line x1="488.0" y1="774.5" x2="505.0" y2="774.5" stroke="#a8a8a8" stroke-width="1.2"/>
<rect x="521.5" y="761.5" width="8" height="13.0" fill="rgba(150,160,175,0.38)" stroke="#a8a8a8" stroke-width="1.3"/>
<line x1="517.0" y1="761.5" x2="534.0" y2="761.5" stroke="#a8a8a8" stroke-width="1.2"/>
<line x1="517.0" y1="774.5" x2="534.0" y2="774.5" stroke="#a8a8a8" stroke-width="1.2"/>
<rect x="551.5" y="764.5" width="8" height="8.0" fill="rgba(150,160,175,0.38)" stroke="#a8a8a8" stroke-width="1.3"/>
<line x1="547.0" y1="764.5" x2="564.0" y2="764.5" stroke="#a8a8a8" stroke-width="1.2"/>
<line x1="547.0" y1="772.5" x2="564.0" y2="772.5" stroke="#a8a8a8" stroke-width="1.2"/>
<rect x="580.5" y="720.5" width="8" height="16.0" fill="rgba(150,160,175,0.38)" stroke="#a8a8a8" stroke-width="1.3"/>
<line x1="576.0" y1="720.5" x2="593.0" y2="720.5" stroke="#a8a8a8" stroke-width="1.2"/>
<line x1="576.0" y1="736.5" x2="593.0" y2="736.5" stroke="#a8a8a8" stroke-width="1.2"/>
<rect x="609.5" y="749.5" width="8" height="19.0" fill="rgba(150,160,175,0.38)" stroke="#a8a8a8" stroke-width="1.3"/>
<line x1="605.0" y1="749.5" x2="622.0" y2="749.5" stroke="#a8a8a8" stroke-width="1.2"/>
<line x1="605.0" y1="768.5" x2="622.0" y2="768.5" stroke="#a8a8a8" stroke-width="1.2"/>
<rect x="639.5" y="739.5" width="8" height="27.0" fill="rgba(150,160,175,0.38)" stroke="#a8a8a8" stroke-width="1.3"/>
<line x1="635.0" y1="739.5" x2="652.0" y2="739.5" stroke="#a8a8a8" stroke-width="1.2"/>
<line x1="635.0" y1="766.5" x2="652.0" y2="766.5" stroke="#a8a8a8" stroke-width="1.2"/>
<line x1="664.0" y1="780.5" x2="681.0" y2="780.5" stroke="#a8a8a8" stroke-width="1.2"/>
<line x1="664.0" y1="780.5" x2="681.0" y2="780.5" stroke="#a8a8a8" stroke-width="1.2"/>
<line x1="693.0" y1="780.5" x2="710.0" y2="780.5" stroke="#a8a8a8" stroke-width="1.2"/>
<line x1="693.0" y1="780.5" x2="710.0" y2="780.5" stroke="#a8a8a8" stroke-width="1.2"/>
<rect x="726.5" y="727.5" width="8" height="9.0" fill="rgba(150,160,175,0.38)" stroke="#a8a8a8" stroke-width="1.3"/>
<line x1="722.0" y1="727.5" x2="739.0" y2="727.5" stroke="#a8a8a8" stroke-width="1.2"/>
<line x1="722.0" y1="736.5" x2="739.0" y2="736.5" stroke="#a8a8a8" stroke-width="1.2"/>
<rect x="756.5" y="758.5" width="8" height="6.0" fill="rgba(150,160,175,0.38)" stroke="#a8a8a8" stroke-width="1.3"/>
<line x1="752.0" y1="758.5" x2="769.0" y2="758.5" stroke="#a8a8a8" stroke-width="1.2"/>
<line x1="752.0" y1="764.5" x2="769.0" y2="764.5" stroke="#a8a8a8" stroke-width="1.2"/>
<rect x="785.5" y="770.5" width="8" height="4.0" fill="rgba(150,160,175,0.38)" stroke="#a8a8a8" stroke-width="1.3"/>
<line x1="781.0" y1="770.5" x2="798.0" y2="770.5" stroke="#a8a8a8" stroke-width="1.2"/>
<line x1="781.0" y1="774.5" x2="798.0" y2="774.5" stroke="#a8a8a8" stroke-width="1.2"/>
<rect x="814.5" y="754.5" width="8" height="17.0" fill="rgba(150,160,175,0.38)" stroke="#a8a8a8" stroke-width="1.3"/>
<line x1="810.0" y1="754.5" x2="827.0" y2="754.5" stroke="#a8a8a8" stroke-width="1.2"/>
<line x1="810.0" y1="771.5" x2="827.0" y2="771.5" stroke="#a8a8a8" stroke-width="1.2"/>
<rect x="843.5" y="745.5" width="8" height="21.0" fill="rgba(150,160,175,0.38)" stroke="#a8a8a8" stroke-width="1.3"/>
<line x1="839.0" y1="745.5" x2="856.0" y2="745.5" stroke="#a8a8a8" stroke-width="1.2"/>
<line x1="839.0" y1="766.5" x2="856.0" y2="766.5" stroke="#a8a8a8" stroke-width="1.2"/>
<rect x="873.5" y="745.5" width="8" height="24.0" fill="rgba(150,160,175,0.38)" stroke="#a8a8a8" stroke-width="1.3"/>
<line x1="869.0" y1="745.5" x2="886.0" y2="745.5" stroke="#a8a8a8" stroke-width="1.2"/>
<line x1="869.0" y1="769.5" x2="886.0" y2="769.5" stroke="#a8a8a8" stroke-width="1.2"/>
<rect x="902.5" y="745.5" width="8" height="27.0" fill="rgba(150,160,175,0.38)" stroke="#a8a8a8" stroke-width="1.3"/>
<line x1="898.0" y1="745.5" x2="915.0" y2="745.5" stroke="#a8a8a8" stroke-width="1.2"/>
<line x1="898.0" y1="772.5" x2="915.0" y2="772.5" stroke="#a8a8a8" stroke-width="1.2"/>
<rect x="931.5" y="686.5" width="8" height="14.0" fill="rgba(150,160,175,0.38)" stroke="#a8a8a8" stroke-width="1.3"/>
<line x1="927.0" y1="686.5" x2="944.0" y2="686.5" stroke="#a8a8a8" stroke-width="1.2"/>
<line x1="927.0" y1="700.5" x2="944.0" y2="700.5" stroke="#a8a8a8" stroke-width="1.2"/>
<line x1="957.0" y1="780.5" x2="974.0" y2="780.5" stroke="#a8a8a8" stroke-width="1.2"/>
<line x1="957.0" y1="780.5" x2="974.0" y2="780.5" stroke="#a8a8a8" stroke-width="1.2"/>
<line x1="986.0" y1="780.5" x2="1003.0" y2="780.5" stroke="#a8a8a8" stroke-width="1.2"/>
<line x1="986.0" y1="780.5" x2="1003.0" y2="780.5" stroke="#a8a8a8" stroke-width="1.2"/>
<rect x="1019.5" y="712.5" width="8" height="12.0" fill="rgba(150,160,175,0.38)" stroke="#a8a8a8" stroke-width="1.3"/>
<line x1="1015.0" y1="712.5" x2="1032.0" y2="712.5" stroke="#a8a8a8" stroke-width="1.2"/>
<line x1="1015.0" y1="724.5" x2="1032.0" y2="724.5" stroke="#a8a8a8" stroke-width="1.2"/>
<rect x="1048.5" y="765.5" width="8" height="6.0" fill="rgba(150,160,175,0.38)" stroke="#a8a8a8" stroke-width="1.3"/>
<line x1="1044.0" y1="765.5" x2="1061.0" y2="765.5" stroke="#a8a8a8" stroke-width="1.2"/>
<line x1="1044.0" y1="771.5" x2="1061.0" y2="771.5" stroke="#a8a8a8" stroke-width="1.2"/>
<rect x="1078.5" y="762.5" width="8" height="9.0" fill="rgba(150,160,175,0.38)" stroke="#a8a8a8" stroke-width="1.3"/>
<line x1="1074.0" y1="762.5" x2="1091.0" y2="762.5" stroke="#a8a8a8" stroke-width="1.2"/>
<line x1="1074.0" y1="771.5" x2="1091.0" y2="771.5" stroke="#a8a8a8" stroke-width="1.2"/>
<rect x="1107.5" y="758.5" width="8" height="5.0" fill="rgba(150,160,175,0.38)" stroke="#a8a8a8" stroke-width="1.3"/>
<line x1="1103.0" y1="758.5" x2="1120.0" y2="758.5" stroke="#a8a8a8" stroke-width="1.2"/>
<line x1="1103.0" y1="763.5" x2="1120.0" y2="763.5" stroke="#a8a8a8" stroke-width="1.2"/>
<rect x="1136.5" y="744.5" width="8" height="8.0" fill="rgba(150,160,175,0.38)" stroke="#a8a8a8" stroke-width="1.3"/>
<line x1="1132.0" y1="744.5" x2="1149.0" y2="744.5" stroke="#a8a8a8" stroke-width="1.2"/>
<line x1="1132.0" y1="752.5" x2="1149.0" y2="752.5" stroke="#a8a8a8" stroke-width="1.2"/>
<rect x="1165.5" y="754.5" width="8" height="18.0" fill="rgba(150,160,175,0.38)" stroke="#a8a8a8" stroke-width="1.3"/>
<line x1="1161.0" y1="754.5" x2="1178.0" y2="754.5" stroke="#a8a8a8" stroke-width="1.2"/>
<line x1="1161.0" y1="772.5" x2="1178.0" y2="772.5" stroke="#a8a8a8" stroke-width="1.2"/>
<line x1="1191.0" y1="780.5" x2="1208.0" y2="780.5" stroke="#a8a8a8" stroke-width="1.2"/>
<line x1="1191.0" y1="780.5" x2="1208.0" y2="780.5" stroke="#a8a8a8" stroke-width="1.2"/>
<rect x="178.5" y="776.58" width="8" height="3.42" fill="#00a810" stroke="#00ff00" stroke-width="1"/>
<text transform="translate(186.50,772.58) scale(1.12,1)" font-size="10.5" fill="#00ff00" text-anchor="middle" font-weight="bold">0.3</text>
<rect x="207.5" y="773.16" width="8" height="6.84" fill="#00a810" stroke="#00ff00" stroke-width="1"/>
<text transform="translate(215.50,769.16) scale(1.12,1)" font-size="10.5" fill="#00ff00" text-anchor="middle" font-weight="bold">0.6</text>
<rect x="237.5" y="767.46" width="8" height="12.540000000000001" fill="#00a810" stroke="#00ff00" stroke-width="1"/>
<text transform="translate(245.50,763.46) scale(1.12,1)" font-size="10.5" fill="#00ff00" text-anchor="middle" font-weight="bold">1.1</text>
<rect x="325.5" y="776.58" width="8" height="3.42" fill="#00a810" stroke="#00ff00" stroke-width="1"/>
<text transform="translate(333.50,772.58) scale(1.12,1)" font-size="10.5" fill="#00ff00" text-anchor="middle" font-weight="bold">0.3</text>
<rect x="354.5" y="772.02" width="8" height="7.9799999999999995" fill="#00a810" stroke="#00ff00" stroke-width="1"/>
<text transform="translate(362.50,768.02) scale(1.12,1)" font-size="10.5" fill="#00ff00" text-anchor="middle" font-weight="bold">0.7</text>
<rect x="383.5" y="769.74" width="8" height="10.26" fill="#00a810" stroke="#00ff00" stroke-width="1"/>
<text transform="translate(391.50,765.74) scale(1.12,1)" font-size="10.5" fill="#00ff00" text-anchor="middle" font-weight="bold">0.9</text>
<rect x="412.5" y="774.3" width="8" height="5.7" fill="#00a810" stroke="#00ff00" stroke-width="1"/>
<text transform="translate(420.50,770.30) scale(1.12,1)" font-size="10.5" fill="#00ff00" text-anchor="middle" font-weight="bold">0.5</text>
<rect x="442.5" y="776.58" width="8" height="3.42" fill="#00a810" stroke="#00ff00" stroke-width="1"/>
<text transform="translate(450.50,772.58) scale(1.12,1)" font-size="10.5" fill="#00ff00" text-anchor="middle" font-weight="bold">0.3</text>
<rect x="471.5" y="777.72" width="8" height="2.2800000000000002" fill="#00a810" stroke="#00ff00" stroke-width="1"/>
<text transform="translate(479.50,773.72) scale(1.12,1)" font-size="10.5" fill="#00ff00" text-anchor="middle" font-weight="bold">0.2</text>
<rect x="500.5" y="775.44" width="8" height="4.5600000000000005" fill="#00a810" stroke="#00ff00" stroke-width="1"/>
<text transform="translate(508.50,771.44) scale(1.12,1)" font-size="10.5" fill="#00ff00" text-anchor="middle" font-weight="bold">0.4</text>
<rect x="529.5" y="774.3" width="8" height="5.7" fill="#00a810" stroke="#00ff00" stroke-width="1"/>
<text transform="translate(537.50,770.30) scale(1.12,1)" font-size="10.5" fill="#00ff00" text-anchor="middle" font-weight="bold">0.5</text>
<rect x="559.5" y="776.58" width="8" height="3.42" fill="#00a810" stroke="#00ff00" stroke-width="1"/>
<text transform="translate(567.50,772.58) scale(1.12,1)" font-size="10.5" fill="#00ff00" text-anchor="middle" font-weight="bold">0.3</text>
<text transform="translate(596.50,774.50) scale(1.12,1)" font-size="10.5" fill="#00ff00" text-anchor="middle" font-weight="bold">0.1</text>
<rect x="617.5" y="778.5" width="8" height="1.5" fill="#00a810" stroke="#00ff00" stroke-width="1"/>
<text transform="translate(625.50,774.50) scale(1.12,1)" font-size="10.5" fill="#00ff00" text-anchor="middle" font-weight="bold">0.1</text>
<text transform="translate(742.50,774.50) scale(1.12,1)" font-size="10.5" fill="#00ff00" text-anchor="middle" font-weight="bold">0.1</text>
<rect x="764.5" y="750.36" width="8" height="29.64" fill="#00a810" stroke="#00ff00" stroke-width="1"/>
<rect x="765" y="777" width="7" height="3" fill="#2233ff"/>
<text transform="translate(772.50,746.36) scale(1.12,1)" font-size="10.5" fill="#00ff00" text-anchor="middle" font-weight="bold">2.6</text>
<rect x="793.5" y="770.88" width="8" height="9.120000000000001" fill="#00a810" stroke="#00ff00" stroke-width="1"/>
<rect x="794" y="777" width="7" height="3" fill="#2233ff"/>
<text transform="translate(801.50,766.88) scale(1.12,1)" font-size="10.5" fill="#00ff00" text-anchor="middle" font-weight="bold">0.8</text>
<rect x="851.5" y="778.5" width="8" height="1.5" fill="#00a810" stroke="#00ff00" stroke-width="1"/>
<text transform="translate(859.50,774.50) scale(1.12,1)" font-size="10.5" fill="#00ff00" text-anchor="middle" font-weight="bold">0.1</text>
<rect x="1056.5" y="772.02" width="8" height="7.9799999999999995" fill="#00a810" stroke="#00ff00" stroke-width="1"/>
<text transform="translate(1064.50,768.02) scale(1.12,1)" font-size="10.5" fill="#00ff00" text-anchor="middle" font-weight="bold">0.7</text>
<rect x="1086.5" y="760.62" width="8" height="19.38" fill="#00a810" stroke="#00ff00" stroke-width="1"/>
<text transform="translate(1094.50,756.62) scale(1.12,1)" font-size="10.5" fill="#00ff00" text-anchor="middle" font-weight="bold">1.7</text>
<rect x="1115.5" y="776.58" width="8" height="3.42" fill="#00a810" stroke="#00ff00" stroke-width="1"/>
<text transform="translate(1123.50,772.58) scale(1.12,1)" font-size="10.5" fill="#00ff00" text-anchor="middle" font-weight="bold">0.3</text>
<rect x="1144.5" y="775.44" width="8" height="4.5600000000000005" fill="#00a810" stroke="#00ff00" stroke-width="1"/>
<text transform="translate(1152.50,771.44) scale(1.12,1)" font-size="10.5" fill="#00ff00" text-anchor="middle" font-weight="bold">0.4</text>
<rect x="1173.5" y="775.44" width="8" height="4.5600000000000005" fill="#00a810" stroke="#00ff00" stroke-width="1"/>
<text transform="translate(1181.50,771.44) scale(1.12,1)" font-size="10.5" fill="#00ff00" text-anchor="middle" font-weight="bold">0.4</text>
<path d="M1215,665.5 H1232 M1215,703.5 H1232" stroke="#a8a8a8" stroke-width="1.5"/>
<rect x="1219.5" y="665.5" width="8" height="38" fill="none" stroke="#a8a8a8" stroke-width="1.2"/>
<text transform="translate(1231.50,665.00) scale(1.0,1)" font-size="9" fill="#c4c8cc" text-anchor="start" font-weight="bold" letter-spacing="0.75" stroke="#c4c8cc" stroke-width="0.3">Конв.обл.</text>
<rect x="1215.5" y="757.5" width="8" height="23" fill="none" stroke="#00ff00" stroke-width="1.5"/>
<text transform="translate(1215.00,756.80) scale(1.0,1)" font-size="9.2" fill="#10ff10" text-anchor="start" font-weight="bold" letter-spacing="0.9" stroke="#10ff10" stroke-width="0.35">Осад,3ч(мм)</text>
</svg></body></html>
